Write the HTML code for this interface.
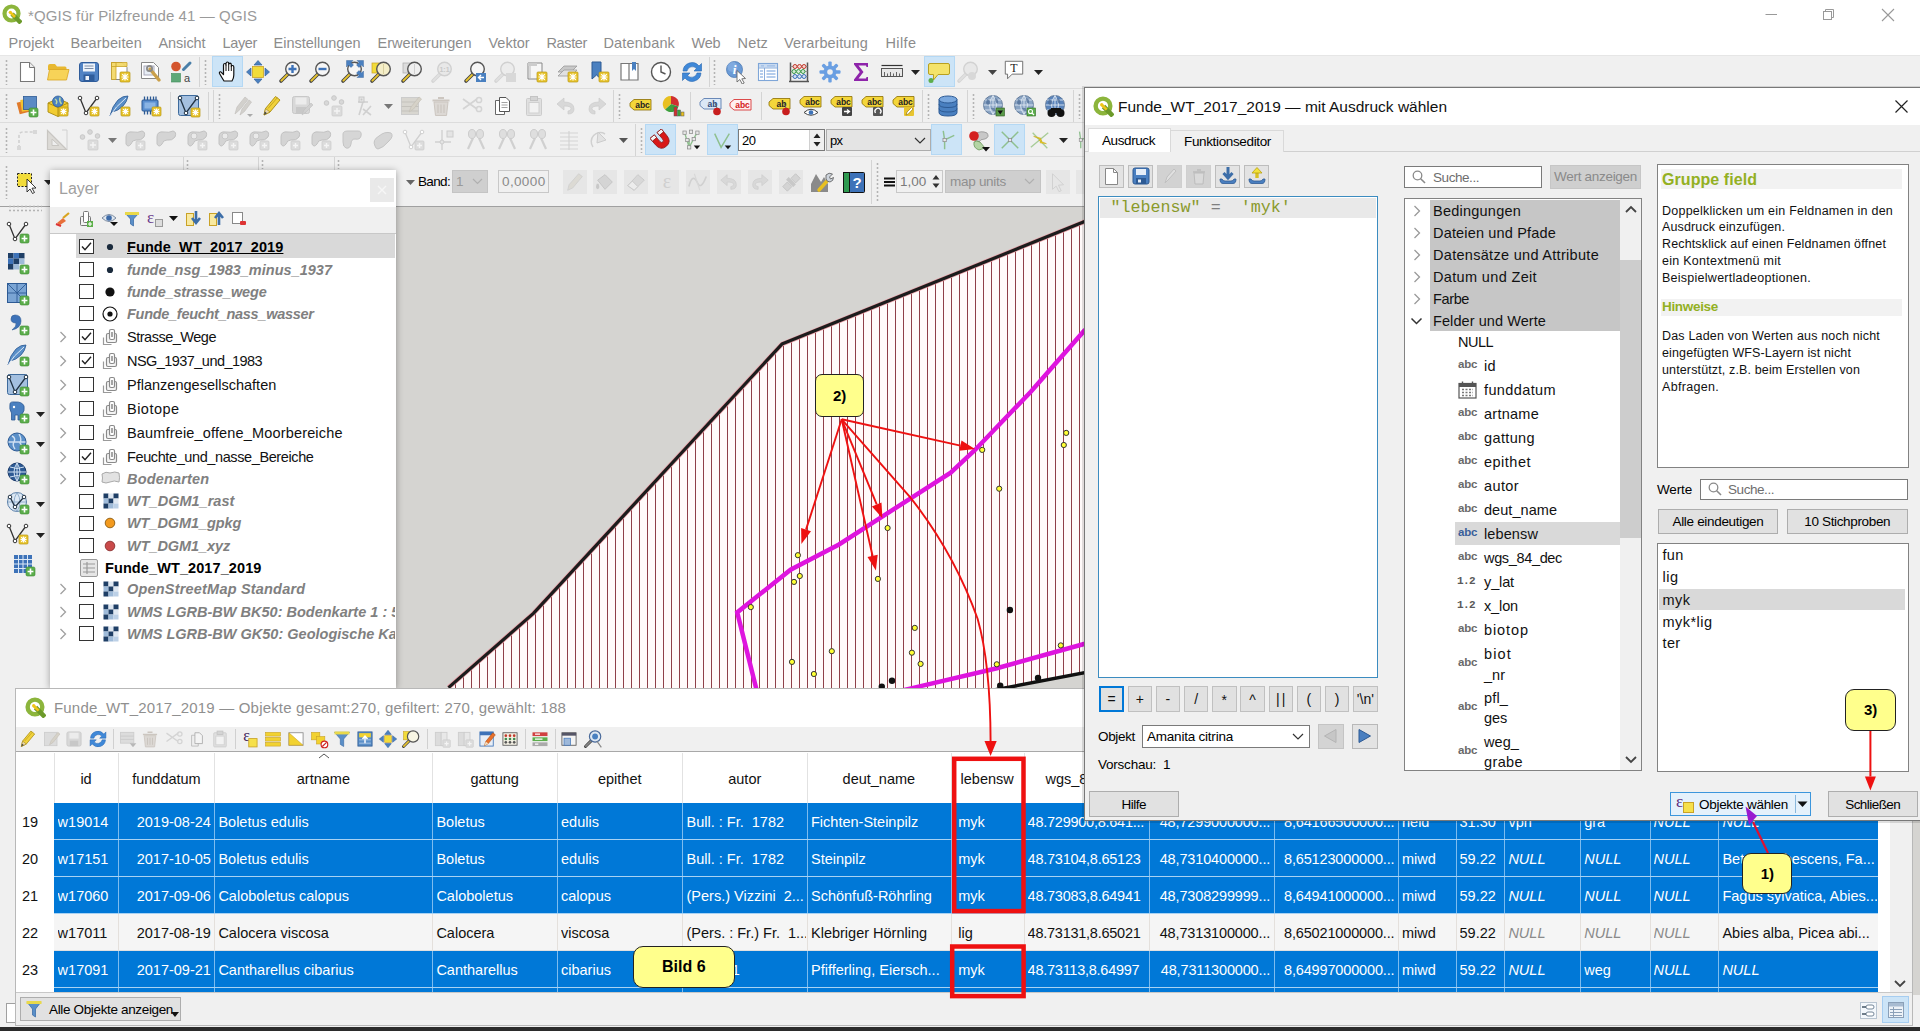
<!DOCTYPE html>
<html lang="de"><head><meta charset="utf-8"><title>QGIS</title><style>
html,body{margin:0;padding:0;}
body{width:1920px;height:1031px;overflow:hidden;position:relative;background:#f0f0f0;font-family:"Liberation Sans",sans-serif;}
.a{position:absolute;box-sizing:border-box;}
.t{white-space:nowrap;}
.m{font-family:"Liberation Mono",monospace;}
.b{font-weight:bold;}
.i{font-style:italic;}
</style></head><body>
<div class="a" style="left:0px;top:0px;width:1920px;height:1031px;background:#f0f0f0;"></div>
<div class="a" style="left:0px;top:0px;width:1920px;height:30px;background:#ffffff;"></div>
<svg class="a" style="left:2px;top:4px;" width="20" height="20" viewBox="0 0 20 20"><circle cx="9.5" cy="9.5" r="7" fill="none" stroke="#8cb53c" stroke-width="4.2"/><path d="M10 10 L19 19" stroke="#6c9a2a" stroke-width="4.5" stroke-linecap="butt"/><path d="M8.5 8.5 L13 13" stroke="#f0c419" stroke-width="2.6"/><circle cx="8.3" cy="8.3" r="1.6" fill="#f0c419"/></svg>
<div class="a t " style="left:28px;top:4.5px;height:21px;line-height:21px;font-size:15px;color:#9a9a9a;letter-spacing:0.100px;">*QGIS für Pilzfreunde 41 — QGIS</div>
<svg class="a" style="left:1765px;top:8px;" width="140" height="14" viewBox="0 0 140 14"><path d="M0.5 6.5 H12" stroke="#999" stroke-width="1"/><rect x="58.5" y="3.5" width="8" height="8" fill="none" stroke="#999"/><path d="M60.5 3.5 V1.5 H68.5 V9.5 H66.5" fill="none" stroke="#999"/><path d="M117 1 L129 13 M129 1 L117 13" stroke="#999" stroke-width="1.1"/></svg>
<div class="a" style="left:0px;top:30px;width:1920px;height:25px;background:#ffffff;"></div>
<div class="a t " style="left:8.5px;top:32.8px;height:20.5px;line-height:20.5px;font-size:14.5px;color:#8c8c8c;letter-spacing:0.053px;">Projekt</div>
<div class="a t " style="left:70.5px;top:32.8px;height:20.5px;line-height:20.5px;font-size:14.5px;color:#8c8c8c;letter-spacing:0.137px;">Bearbeiten</div>
<div class="a t " style="left:158.5px;top:32.8px;height:20.5px;line-height:20.5px;font-size:14.5px;color:#8c8c8c;letter-spacing:-0.078px;">Ansicht</div>
<div class="a t " style="left:222.5px;top:32.8px;height:20.5px;line-height:20.5px;font-size:14.5px;color:#8c8c8c;letter-spacing:-0.354px;">Layer</div>
<div class="a t " style="left:273.5px;top:32.8px;height:20.5px;line-height:20.5px;font-size:14.5px;color:#8c8c8c;letter-spacing:-0.005px;">Einstellungen</div>
<div class="a t " style="left:377.5px;top:32.8px;height:20.5px;line-height:20.5px;font-size:14.5px;color:#8c8c8c;letter-spacing:0.039px;">Erweiterungen</div>
<div class="a t " style="left:488.5px;top:32.8px;height:20.5px;line-height:20.5px;font-size:14.5px;color:#8c8c8c;letter-spacing:-0.018px;">Vektor</div>
<div class="a t " style="left:546.5px;top:32.8px;height:20.5px;line-height:20.5px;font-size:14.5px;color:#8c8c8c;letter-spacing:-0.367px;">Raster</div>
<div class="a t " style="left:603.5px;top:32.8px;height:20.5px;line-height:20.5px;font-size:14.5px;color:#8c8c8c;letter-spacing:0.152px;">Datenbank</div>
<div class="a t " style="left:691.5px;top:32.8px;height:20.5px;line-height:20.5px;font-size:14.5px;color:#8c8c8c;letter-spacing:-0.184px;">Web</div>
<div class="a t " style="left:737.5px;top:32.8px;height:20.5px;line-height:20.5px;font-size:14.5px;color:#8c8c8c;letter-spacing:0.172px;">Netz</div>
<div class="a t " style="left:784px;top:32.8px;height:20.5px;line-height:20.5px;font-size:14.5px;color:#8c8c8c;letter-spacing:0.148px;">Verarbeitung</div>
<div class="a t " style="left:885.5px;top:32.8px;height:20.5px;line-height:20.5px;font-size:14.5px;color:#8c8c8c;letter-spacing:0.399px;">Hilfe</div>
<div class="a" style="left:0px;top:88px;width:1920px;height:1px;background:#dcdcdc;"></div>
<div class="a" style="left:0px;top:122px;width:1920px;height:1px;background:#dcdcdc;"></div>
<div class="a" style="left:0px;top:156px;width:1920px;height:1px;background:#dcdcdc;"></div>
<div class="a" style="left:0px;top:55px;width:1920px;height:1px;background:#e6e6e6;"></div>
<div class="a" style="left:0px;top:206px;width:1920px;height:1px;background:#a0a0a0;"></div>
<div class="a" style="left:0px;top:207px;width:1920px;height:790px;background:#d5d4d1;"></div>
<div class="a" style="left:0px;top:207px;width:50px;height:790px;background:#f0f0f0;"></div>
<div class="a" style="left:0px;top:995px;width:1920px;height:36px;background:#f0f0f0;"></div>
<div class="a" style="left:6px;top:1003px;width:40px;height:20px;background:#fff;border:1px solid #a0a0a0;"></div>
<div class="a" style="left:0px;top:1027px;width:1920px;height:4px;background:#2b2b2b;"></div>
<svg class="a" style="left:396px;top:207px;" width="700" height="483" viewBox="0 0 700 483"><defs><pattern id="hat" width="8" height="8" patternUnits="userSpaceOnUse" x="3"><rect width="8" height="8" fill="#fffafa"/><rect x="0" width="1" height="8" fill="#8f3f48"/></pattern><clipPath id="pc"><polygon points="52.5,480.6 137.4,406.4 385.9,137.1 688.0,14.8 704.0,8.0 704.0,493.0 34.0,493.0"/></clipPath></defs><polygon points="52.5,480.6 137.4,406.4 385.9,137.1 688.0,14.8 704.0,8.0 704.0,493.0 34.0,493.0" fill="url(#hat)"/><polyline points="52.5,480.6 137.4,406.4 385.9,137.1 688.0,14.8 704.0,8.0" fill="none" stroke="#e9a0a8" stroke-width="4.6"/><polyline points="52.5,480.6 137.4,406.4 385.9,137.1 688.0,14.8 704.0,8.0" fill="none" stroke="#1c1c1c" stroke-width="3.2" stroke-linejoin="round"/><polygon points="704.0,462.7 608.8,481.0 599.0,483.0 704.0,483.0" fill="#d5d4d1"/><polyline points="704.0,462.7 608.8,481.0 598.0,483.0" fill="none" stroke="#111" stroke-width="3.4"/><polyline points="704.0,111.0 688.0,124.0 634.8,184.7 579.0,243.0 554.7,265.7 484.3,310.8 443.0,337.5 394.6,362.7 341.2,405.4 360.6,483.0" fill="none" stroke="#de14de" stroke-width="4.5" stroke-linejoin="miter"/><polyline points="704.0,433.0 688.0,437.0 600.8,461.2 518.3,480.6 504.0,484.0" fill="none" stroke="#de14de" stroke-width="4.5"/><circle cx="586.2" cy="242.9" r="2.6" fill="#ffff33" stroke="#333" stroke-width="1"/><circle cx="670.2" cy="225.9" r="2.6" fill="#ffff33" stroke="#333" stroke-width="1"/><circle cx="667.8" cy="238.0" r="2.6" fill="#ffff33" stroke="#333" stroke-width="1"/><circle cx="603.2" cy="281.7" r="2.6" fill="#ffff33" stroke="#333" stroke-width="1"/><circle cx="491.6" cy="321.0" r="2.6" fill="#ffff33" stroke="#333" stroke-width="1"/><circle cx="401.9" cy="348.2" r="2.6" fill="#ffff33" stroke="#333" stroke-width="1"/><circle cx="403.8" cy="369.0" r="2.6" fill="#ffff33" stroke="#333" stroke-width="1"/><circle cx="398.0" cy="374.9" r="2.6" fill="#ffff33" stroke="#333" stroke-width="1"/><circle cx="481.9" cy="371.9" r="2.6" fill="#ffff33" stroke="#333" stroke-width="1"/><circle cx="354.8" cy="400.1" r="2.6" fill="#ffff33" stroke="#333" stroke-width="1"/><circle cx="518.8" cy="420.9" r="2.6" fill="#ffff33" stroke="#333" stroke-width="1"/><circle cx="435.8" cy="444.2" r="2.6" fill="#ffff33" stroke="#333" stroke-width="1"/><circle cx="515.9" cy="445.7" r="2.6" fill="#ffff33" stroke="#333" stroke-width="1"/><circle cx="524.6" cy="456.9" r="2.6" fill="#ffff33" stroke="#333" stroke-width="1"/><circle cx="396.0" cy="454.9" r="2.6" fill="#ffff33" stroke="#333" stroke-width="1"/><circle cx="417.9" cy="467.0" r="2.6" fill="#ffff33" stroke="#333" stroke-width="1"/><circle cx="600.8" cy="457.3" r="2.6" fill="#ffff33" stroke="#333" stroke-width="1"/><circle cx="664.8" cy="438.4" r="2.6" fill="#ffff33" stroke="#333" stroke-width="1"/><circle cx="613.9" cy="403.0" r="3.2" fill="#111"/><circle cx="496.0" cy="473.8" r="3.2" fill="#111"/><circle cx="485.8" cy="479.7" r="3.2" fill="#111"/><circle cx="642.0" cy="470.9" r="3.2" fill="#111"/><circle cx="604.2" cy="478.7" r="3.2" fill="#111"/></svg>
<div class="a" style="left:5px;top:59px;width:3px;height:26px;background-image:radial-gradient(circle,#b4b4b4 0.9px,transparent 1.2px);background-size:3px 4px;"></div>
<svg class="a" style="left:14.5px;top:59.5px;" width="24" height="24" viewBox="0 0 24 24"><path d="M5.500 2.500 H14.500 L19.500 7.500 V21.500 H5.500 Z" fill="#fff" stroke="#777" stroke-width="1.1"/><path d="M14.500 2.500 V7.500 H19.500" fill="#eee" stroke="#777" stroke-width="1"/></svg>
<svg class="a" style="left:45.5px;top:59.5px;" width="24" height="24" viewBox="0 0 24 24"><path d="M2 6 Q2 4 4 4 H9 L11 6.500 H19 Q20.500 6.500 20.500 8 V10 H2 Z" fill="#e8b830"/><path d="M1.500 20 L3.500 9.500 H23 L20.500 20 Z" fill="#f7d358" stroke="#d9a520" stroke-width="0.8"/></svg>
<svg class="a" style="left:77.0px;top:59.5px;" width="24" height="24" viewBox="0 0 24 24"><rect x="2.500" y="2.500" width="19" height="19" rx="2.500" fill="#5183c4" stroke="#2f5c9a" stroke-width="1"/><rect x="6" y="3.500" width="12" height="8" fill="#eef3fa"/><path d="M7.500 6 H16.500 M7.500 8.500 H16.500" stroke="#7c8ea8" stroke-width="1"/><rect x="6.500" y="14.500" width="11" height="7" fill="#2f5c9a"/><rect x="8.500" y="16" width="3.500" height="4" fill="#eef3fa"/></svg>
<svg class="a" style="left:108.0px;top:59.5px;" width="24" height="24" viewBox="0 0 24 24"><path d="M3.500 2.500 H14 L19 7.500 V19.500 H3.500 Z" fill="#fff" stroke="#888"/><path d="M3.500 2.500 H8 V19.500 H3.500 Z M3.500 2.500 H19 V6.500 H3.500 Z" fill="#f3d762" stroke="#c9a227" stroke-width="0.8" fill-opacity="0.9"/><rect x="12" y="12" width="10" height="10" rx="1" fill="#e8c530" stroke="#b8960f" stroke-width="0.7"/><path d="M17.0 13.5 V20.5 M13.5 17.0 H20.5 M14.2 14.2 L19.8 19.8 M19.8 14.2 L14.2 19.8" stroke="#fff" stroke-width="1.2"/></svg>
<svg class="a" style="left:138.5px;top:59.5px;" width="24" height="24" viewBox="0 0 24 24"><path d="M2.500 2.500 H14.500 L19.500 7.500 V18.500 H2.500 Z" fill="#fff" stroke="#888"/><rect x="5" y="6" width="10" height="9" fill="#e8eef6" stroke="#aab"/><path d="M11 9 L20 20" stroke="#caa04a" stroke-width="3.400" stroke-linecap="round"/><circle cx="10.500" cy="8.500" r="2.600" fill="none" stroke="#8a8a8a" stroke-width="1.800"/></svg>
<svg class="a" style="left:169.0px;top:59.5px;" width="24" height="24" viewBox="0 0 24 24"><circle cx="7" cy="6.500" r="4.800" fill="#d4552e"/><rect x="2.500" y="13.500" width="9" height="8.500" fill="#5fa877" stroke="#3f8a5a" stroke-width="0.6"/><path d="M14.500 9.500 L21 3" stroke="#4a7fa8" stroke-width="3" stroke-linecap="round"/><text x="18" y="22" font-family="Liberation Sans, sans-serif" font-size="11" text-anchor="middle" fill="#444">a</text></svg>
<div class="a" style="left:199px;top:57px;width:1px;height:30px;background:#d4d4d4;"></div>
<div class="a" style="left:204px;top:59px;width:3px;height:26px;background-image:radial-gradient(circle,#b4b4b4 0.9px,transparent 1.2px);background-size:3px 4px;"></div>
<div class="a" style="left:212px;top:56px;width:31px;height:31px;background:#cce4f7;border:1px solid #b4d8f4;"></div>
<svg class="a" style="left:215.5px;top:59.5px;" width="24" height="24" viewBox="0 0 24 24"><path d="M8 21 Q5.500 17 3.500 13.500 Q3 11.500 4.800 11.800 L7.500 14.500 V5 Q7.600 3.500 8.800 3.500 Q10 3.500 10 5 V3.500 Q10.200 2 11.400 2 Q12.700 2 12.700 3.500 V4.500 Q12.900 3.200 14 3.200 Q15.300 3.300 15.300 4.800 V6.500 Q15.600 5.400 16.600 5.500 Q17.800 5.600 17.800 7 V15 Q17.800 18.500 16 21 Z" fill="#fff" stroke="#111" stroke-width="1.200" stroke-linejoin="round"/><path d="M10 5 V11 M12.700 4.500 V11 M15.300 6.500 V11" stroke="#111" stroke-width="1"/></svg>
<svg class="a" style="left:245.5px;top:59.5px;" width="24" height="24" viewBox="0 0 24 24"><rect x="6.500" y="6.500" width="11" height="11" fill="#f2dc3a" stroke="#c9a227" stroke-width="0.8"/><path d="M12 0.500 L16 5 H8 Z M12 23.500 L16 19 H8 Z M0.500 12 L5 8 V16 Z M23.500 12 L19 8 V16 Z" fill="#4a80c0" stroke="#2d5a94" stroke-width="0.6"/></svg>
<svg class="a" style="left:277.5px;top:59.5px;" width="24" height="24" viewBox="0 0 24 24"><path d="M10 14 L3 21" stroke="#444" stroke-width="3.6" stroke-linecap="round"/><path d="M9.6 14.4 L3.4 20.6" stroke="#e8c530" stroke-width="2" stroke-linecap="round"/><circle cx="14.5" cy="9" r="6.8" fill="#f6f6f6" stroke="#555" stroke-width="1.4"/><path d="M10.500 9 H18.500 M14.500 5 V13" stroke="#3d72b8" stroke-width="2.400"/></svg>
<svg class="a" style="left:308.0px;top:59.5px;" width="24" height="24" viewBox="0 0 24 24"><path d="M10 14 L3 21" stroke="#444" stroke-width="3.6" stroke-linecap="round"/><path d="M9.6 14.4 L3.4 20.6" stroke="#e8c530" stroke-width="2" stroke-linecap="round"/><circle cx="14.5" cy="9" r="6.8" fill="#f6f6f6" stroke="#555" stroke-width="1.4"/><path d="M10.500 9 H18.500" stroke="#3d72b8" stroke-width="2.400"/></svg>
<svg class="a" style="left:340.0px;top:59.5px;" width="24" height="24" viewBox="0 0 24 24"><path d="M10 14 L3 21" stroke="#444" stroke-width="3.6" stroke-linecap="round"/><path d="M9.6 14.4 L3.4 20.6" stroke="#e8c530" stroke-width="2" stroke-linecap="round"/><circle cx="14.5" cy="9" r="6.8" fill="#f6f6f6" stroke="#555" stroke-width="1.4"/><path d="M6.500 0.500 H13 L11 2.500 L13.500 5 L11 7.500 L8.500 5 L6.500 7 Z M23.500 0.500 V7 L21.500 5 L19 7.500 L16.500 5 L19 2.500 L17 0.500 Z M23.500 17.500 H17 L19 15.500 L16.500 13 L19 10.500 L21.500 13 L23.500 11 Z" fill="#4a80c0" stroke="#2d5a94" stroke-width="0.400"/></svg>
<svg class="a" style="left:369.0px;top:59.5px;" width="24" height="24" viewBox="0 0 24 24"><rect x="3" y="3" width="9" height="10" fill="#f2dc3a" stroke="#c9a227" stroke-width="0.700"/><path d="M10 14 L3 21" stroke="#444" stroke-width="3.6" stroke-linecap="round"/><path d="M9.6 14.4 L3.4 20.6" stroke="#e8c530" stroke-width="2" stroke-linecap="round"/><circle cx="14.5" cy="9" r="6.8" fill="#f4eec8" stroke="#555" stroke-width="1.4"/><path d="M14.500 4 V14" stroke="#d8cfa0" stroke-width="1"/></svg>
<svg class="a" style="left:400.0px;top:59.5px;" width="24" height="24" viewBox="0 0 24 24"><rect x="3" y="3" width="9" height="10" fill="#dcdcdc" stroke="#aaa" stroke-width="0.700"/><path d="M10 14 L3 21" stroke="#444" stroke-width="3.6" stroke-linecap="round"/><path d="M9.6 14.4 L3.4 20.6" stroke="#e8c530" stroke-width="2" stroke-linecap="round"/><circle cx="14.5" cy="9" r="6.8" fill="#f0f0f0" stroke="#555" stroke-width="1.4"/><path d="M14.500 4 V14" stroke="#d0d0d0" stroke-width="1"/></svg>
<svg class="a" style="left:430.0px;top:59.5px;" width="24" height="24" viewBox="0 0 24 24"><path d="M10 14 L3 21" stroke="#d4d4d4" stroke-width="3.6" stroke-linecap="round"/><path d="M9.6 14.4 L3.4 20.6" stroke="#e0e0e0" stroke-width="2" stroke-linecap="round"/><circle cx="14.5" cy="9" r="6.8" fill="#e8e8e8" stroke="#d0d0d0" stroke-width="1.4"/><text x="14.500" y="11.500" font-family="Liberation Sans, sans-serif" font-size="7" font-weight="bold" text-anchor="middle" fill="#c8c8c8">1:1</text></svg>
<svg class="a" style="left:463.0px;top:59.5px;" width="24" height="24" viewBox="0 0 24 24"><path d="M10 14 L3 21" stroke="#444" stroke-width="3.6" stroke-linecap="round"/><path d="M9.6 14.4 L3.4 20.6" stroke="#e8c530" stroke-width="2" stroke-linecap="round"/><circle cx="14.5" cy="9" r="6.8" fill="#f6f6f6" stroke="#555" stroke-width="1.4"/><rect x="13" y="13" width="10" height="9" fill="#4a80c0"/><path d="M21 17.500 H16 M18 15 L15.500 17.500 L18 20" stroke="#fff" stroke-width="1.400" fill="none"/></svg>
<svg class="a" style="left:493.0px;top:59.5px;" width="24" height="24" viewBox="0 0 24 24"><path d="M10 14 L3 21" stroke="#d4d4d4" stroke-width="3.6" stroke-linecap="round"/><path d="M9.6 14.4 L3.4 20.6" stroke="#e0e0e0" stroke-width="2" stroke-linecap="round"/><circle cx="14.5" cy="9" r="6.8" fill="#ececec" stroke="#d0d0d0" stroke-width="1.4"/><rect x="13" y="13" width="10" height="9" fill="#d8d8d8"/></svg>
<svg class="a" style="left:525.0px;top:59.5px;" width="24" height="24" viewBox="0 0 24 24"><path d="M3 3 H17 V19 H3 Z" fill="#f6f6f6" stroke="#888"/><path d="M5 3 V19" stroke="#bbb"/><path d="M3 3 H12 V6 H3 Z" fill="#ccc"/><rect x="12" y="12" width="10" height="10" rx="1" fill="#e8c530" stroke="#b8960f" stroke-width="0.7"/><path d="M17.0 13.5 V20.5 M13.5 17.0 H20.5 M14.2 14.2 L19.8 19.8 M19.8 14.2 L14.2 19.8" stroke="#fff" stroke-width="1.2"/></svg>
<svg class="a" style="left:556.0px;top:59.5px;" width="24" height="24" viewBox="0 0 24 24"><path d="M2 12 L8 6 H21 L15 12 Z" fill="#c8c8c8" stroke="#999" stroke-width="0.800"/><path d="M2 16 L8 10 H21 L15 16 Z" fill="#e0e0e0" stroke="#999" stroke-width="0.800"/><rect x="12" y="12" width="10" height="10" rx="1" fill="#e8c530" stroke="#b8960f" stroke-width="0.7"/><path d="M17.0 13.5 V20.5 M13.5 17.0 H20.5 M14.2 14.2 L19.8 19.8 M19.8 14.2 L14.2 19.8" stroke="#fff" stroke-width="1.2"/></svg>
<svg class="a" style="left:587.0px;top:59.5px;" width="24" height="24" viewBox="0 0 24 24"><path d="M5 2 H14 V19 L9.500 15 L5 19 Z" fill="#4a80c0" stroke="#2d5a94"/><rect x="12" y="12" width="10" height="10" rx="1" fill="#e8c530" stroke="#b8960f" stroke-width="0.7"/><path d="M17.0 13.5 V20.5 M13.5 17.0 H20.5 M14.2 14.2 L19.8 19.8 M19.8 14.2 L14.2 19.8" stroke="#fff" stroke-width="1.2"/></svg>
<svg class="a" style="left:618.0px;top:59.5px;" width="24" height="24" viewBox="0 0 24 24"><path d="M3 3.500 H11 V20 H3 Z M11 3.500 H20 V20 H11 Z" fill="#fff" stroke="#777" stroke-width="1.200"/><path d="M14 2 H18 V11 L16 9 L14 11 Z" fill="#4a80c0"/></svg>
<svg class="a" style="left:649.0px;top:59.5px;" width="24" height="24" viewBox="0 0 24 24"><circle cx="12" cy="12" r="9.500" fill="#fff" stroke="#555" stroke-width="1.400"/><path d="M12 5.500 V12 L16.500 14" fill="none" stroke="#555" stroke-width="1.400"/></svg>
<svg class="a" style="left:680.0px;top:59.5px;" width="24" height="24" viewBox="0 0 24 24"><path d="M3 11 A9 9 0 0 1 19 6 L21.500 3.500 V11 H14 L16.500 8.500 A5.500 5.500 0 0 0 7 11 Z" fill="#3f88d8" stroke="#2666b0" stroke-width="0.600"/><path d="M21 13 A9 9 0 0 1 5 18 L2.500 20.500 V13 H10 L7.500 15.500 A5.500 5.500 0 0 0 17 13 Z" fill="#3f88d8" stroke="#2666b0" stroke-width="0.600"/></svg>
<div class="a" style="left:709px;top:57px;width:1px;height:30px;background:#d4d4d4;"></div>
<div class="a" style="left:713px;top:59px;width:3px;height:26px;background-image:radial-gradient(circle,#b4b4b4 0.9px,transparent 1.2px);background-size:3px 4px;"></div>
<svg class="a" style="left:725.0px;top:59.5px;" width="24" height="24" viewBox="0 0 24 24"><circle cx="9.500" cy="9.500" r="8" fill="#6b9bd6" stroke="#4a78b4" stroke-width="0.800"/><circle cx="7.500" cy="7" r="5" fill="#8db4e4" opacity="0.600"/><text x="9.500" y="14" font-family="Liberation Serif, serif" font-size="13" font-weight="bold" font-style="italic" text-anchor="middle" fill="#fff">i</text><path d="M12 10.500 V22 L14.800 19.500 L17.200 24 L19.200 23 L16.800 18.800 L20.500 18.500 Z" fill="#fff" stroke="#666" stroke-width="0.900"/></svg>
<svg class="a" style="left:756.0px;top:59.5px;" width="24" height="24" viewBox="0 0 24 24"><rect x="2.500" y="3.500" width="19" height="17" fill="#fff" stroke="#7fa6d8" stroke-width="1.100"/><rect x="3" y="4" width="18" height="3.500" fill="#c8daf0"/><path d="M2.500 8 H21.500 M8.500 8 V20.500" stroke="#7fa6d8" stroke-width="0.900"/><path d="M4 11 H7 M10.500 11 H19.500 M4 14 H7 M10.500 14 H19.500 M4 17 H7 M10.500 17 H19.500 M5 5.800 H8 M11 5.800 H19" stroke="#9dbde6" stroke-width="1.300"/></svg>
<svg class="a" style="left:787.0px;top:59.5px;" width="24" height="24" viewBox="0 0 24 24"><path d="M3.500 2.500 V21 M20.500 2.500 V21 M2 21.500 H22" stroke="#555" stroke-width="1.500"/><path d="M3.500 6.500 H20.500 M3.500 11.500 H20.500 M3.500 16.500 H20.500" stroke="#888" stroke-width="0.800"/><g fill="#f4d4d0" stroke="#c0392b" stroke-width="1"><circle cx="8" cy="6.500" r="2"/><circle cx="12.500" cy="6.500" r="2"/><circle cx="17" cy="6.500" r="2"/></g><g fill="#d4ecd4" stroke="#3d9a4a" stroke-width="1"><circle cx="7" cy="11.500" r="2"/><circle cx="11.500" cy="11.500" r="2"/><circle cx="16" cy="11.500" r="2"/></g><g fill="#d4e0f4" stroke="#3d72b8" stroke-width="1"><circle cx="8" cy="16.500" r="2"/><circle cx="12.500" cy="16.500" r="2"/><circle cx="17" cy="16.500" r="2"/></g></svg>
<svg class="a" style="left:818.0px;top:59.5px;" width="24" height="24" viewBox="0 0 24 24"><g fill="#6a9fe2"><circle cx="12" cy="12" r="6.500"/><rect x="10.300" y="1.500" width="3.400" height="21" rx="1" transform="rotate(0 12 12)"/><rect x="10.300" y="1.500" width="3.400" height="21" rx="1" transform="rotate(45 12 12)"/><rect x="10.300" y="1.500" width="3.400" height="21" rx="1" transform="rotate(90 12 12)"/><rect x="10.300" y="1.500" width="3.400" height="21" rx="1" transform="rotate(135 12 12)"/></g><circle cx="12" cy="12" r="2.800" fill="#f0f0f0"/></svg>
<svg class="a" style="left:849.0px;top:59.5px;" width="24" height="24" viewBox="0 0 24 24"><path d="M5 3 H19 V7 H17.500 L17 5.500 H9.500 L14.500 12 L9.500 18.500 H17 L17.500 17 H19 V21 H5 V19.500 L10.800 12 L5 4.500 Z" fill="#8e24aa"/></svg>
<svg class="a" style="left:880.0px;top:59.5px;" width="24" height="24" viewBox="0 0 24 24"><rect x="1.500" y="8.500" width="21" height="8" fill="#e8e8e8" stroke="#555" stroke-width="1"/><path d="M4.500 16 V12 M7.500 16 V13.500 M10.500 16 V12 M13.500 16 V13.500 M16.500 16 V12 M19.500 16 V13.500" stroke="#555" stroke-width="0.900"/><path d="M1.500 5.500 H22.500" stroke="#333" stroke-width="1.200"/></svg>
<svg class="a" style="left:910.5px;top:69.5px;" width="9" height="6" viewBox="0 0 9 6"><path d="M0 0 H9 L4.500 5 Z" fill="#222"/></svg>
<div class="a" style="left:924px;top:56px;width:31px;height:31px;background:#cce4f7;border:1px solid #b4d8f4;"></div>
<svg class="a" style="left:927.0px;top:59.5px;" width="24" height="24" viewBox="0 0 24 24"><path d="M3 3.500 H21 Q22.500 3.500 22.500 5 V13 Q22.500 14.500 21 14.500 H11 L6.500 20 V14.500 H3 Q1.500 14.500 1.500 13 V5 Q1.500 3.500 3 3.500 Z" fill="#f4e36a" stroke="#b8a020" stroke-width="1"/><circle cx="4" cy="20.500" r="2.500" fill="#5cae4c"/></svg>
<svg class="a" style="left:956.0px;top:59.5px;" width="24" height="24" viewBox="0 0 24 24"><path d="M10 14 L3 21" stroke="#d4d4d4" stroke-width="3.6" stroke-linecap="round"/><path d="M9.6 14.4 L3.4 20.6" stroke="#e0e0e0" stroke-width="2" stroke-linecap="round"/><circle cx="14.5" cy="9" r="6.8" fill="#e8e8e8" stroke="#d2d2d2" stroke-width="1.4"/><circle cx="16" cy="16" r="4" fill="#d8d8d8"/></svg>
<svg class="a" style="left:987.5px;top:69.5px;" width="9" height="6" viewBox="0 0 9 6"><path d="M0 0 H9 L4.500 5 Z" fill="#444"/></svg>
<svg class="a" style="left:1003.0px;top:59.0px;" width="22" height="22" viewBox="0 0 24 24"><path d="M2.500 2.500 H21.500 V16.500 H10 L5 21.500 V16.500 H2.500 Z" fill="#fff" stroke="#666" stroke-width="1"/><text x="12" y="14" font-family="Liberation Serif, serif" font-size="13" text-anchor="middle" fill="#222">T</text></svg>
<svg class="a" style="left:1033.5px;top:69.5px;" width="9" height="6" viewBox="0 0 9 6"><path d="M0 0 H9 L4.500 5 Z" fill="#222"/></svg>
<div class="a" style="left:5px;top:93px;width:3px;height:26px;background-image:radial-gradient(circle,#b4b4b4 0.9px,transparent 1.2px);background-size:3px 4px;"></div>
<svg class="a" style="left:15.0px;top:93.5px;" width="24" height="24" viewBox="0 0 24 24"><rect x="3" y="7" width="12" height="12" fill="#e07a2a" transform="rotate(-15 9 13)"/><rect x="6" y="5" width="12" height="12" fill="#f2c230" transform="rotate(-8 12 11)"/><rect x="8.500" y="2.500" width="13" height="13" fill="#5a8ac4" stroke="#2d5a94" stroke-width="0.800"/><rect x="14" y="14" width="9" height="9" rx="1.5" fill="#5cae4c" stroke="#3d8a30" stroke-width="0.6"/><path d="M18.5 15.6 V21.4 M15.6 18.5 H21.4" stroke="#fff" stroke-width="1.6"/></svg>
<svg class="a" style="left:46.0px;top:93.5px;" width="24" height="24" viewBox="0 0 24 24"><path d="M2 9 L12 4.500 L22 9 V18 L12 22.500 L2 18 Z" fill="#f2cc30" stroke="#a88a10" stroke-width="0.900"/><path d="M2 9 L12 13.500 L22 9 M12 13.500 V22.500" fill="none" stroke="#a88a10" stroke-width="0.900"/><circle cx="12" cy="7.500" r="5.500" fill="#4a80c0" stroke="#2d5a94" stroke-width="0.700"/><path d="M9 5 Q12 7 10 10 M14 3.500 Q13 7 15.500 10" stroke="#bcd6a0" stroke-width="1.500" fill="none"/><rect x="13" y="13" width="9" height="9" rx="1" fill="#e8c530" stroke="#b8960f" stroke-width="0.7"/><path d="M17.5 14.5 V20.5 M14.5 17.5 H20.5 M15.2 15.2 L19.8 19.8 M19.8 15.2 L15.2 19.8" stroke="#fff" stroke-width="1.2"/></svg>
<svg class="a" style="left:77.0px;top:93.5px;" width="24" height="24" viewBox="0 0 24 24"><path d="M3 4 L9 19 L20 4" fill="none" stroke="#333" stroke-width="1.3"/><circle cx="3" cy="4" r="1.8" fill="#fff" stroke="#333"/><circle cx="9" cy="19" r="1.8" fill="#fff" stroke="#333"/><circle cx="20" cy="4" r="1.8" fill="#fff" stroke="#333"/><rect x="13" y="13" width="9" height="9" rx="1" fill="#e8c530" stroke="#b8960f" stroke-width="0.7"/><path d="M17.5 14.5 V20.5 M14.5 17.5 H20.5 M15.2 15.2 L19.8 19.8 M19.8 15.2 L15.2 19.8" stroke="#fff" stroke-width="1.2"/></svg>
<svg class="a" style="left:108.0px;top:93.5px;" width="24" height="24" viewBox="0 0 24 24"><path d="M2 22 Q4 12 10 6 Q15 1.500 20 2 Q19 8 15 12 Q10 17 4 18 Z" fill="#5a8fc8" stroke="#2d5a94" stroke-width="0.800"/><path d="M2 22 Q7 13 18 4" stroke="#dce8f6" stroke-width="1" fill="none"/><rect x="13" y="13" width="9" height="9" rx="1" fill="#e8c530" stroke="#b8960f" stroke-width="0.7"/><path d="M17.5 14.5 V20.5 M14.5 17.5 H20.5 M15.2 15.2 L19.8 19.8 M19.8 15.2 L15.2 19.8" stroke="#fff" stroke-width="1.2"/></svg>
<svg class="a" style="left:139.0px;top:93.5px;" width="24" height="24" viewBox="0 0 24 24"><rect x="3" y="6" width="16" height="11" rx="1" fill="#5a8fd0" stroke="#2d5a94"/><path d="M5.500 6 V2.500 M8.500 6 V2.500 M11.500 6 V2.500 M14.500 6 V2.500 M17 6 V2.500 M5.500 17 V20.500 M8.500 17 V20.500 M11.500 17 V20.500" stroke="#2d5a94" stroke-width="1.300"/><rect x="5.500" y="8.500" width="11" height="6" fill="#8ab4e4"/><rect x="13" y="13" width="9" height="9" rx="1" fill="#e8c530" stroke="#b8960f" stroke-width="0.7"/><path d="M17.5 14.5 V20.5 M14.5 17.5 H20.5 M15.2 15.2 L19.8 19.8 M19.8 15.2 L15.2 19.8" stroke="#fff" stroke-width="1.2"/></svg>
<div class="a" style="left:170px;top:92px;width:1px;height:28px;background:#d4d4d4;"></div>
<svg class="a" style="left:177.0px;top:93.5px;" width="24" height="24" viewBox="0 0 24 24"><rect x="1.500" y="1.500" width="20" height="20" rx="2" fill="#a4c0e0" stroke="#3d6a9c" stroke-width="1"/><path d="M3 4 L9 19 L20 4" fill="none" stroke="#234" stroke-width="1.3"/><circle cx="3" cy="4" r="1.8" fill="#fff" stroke="#234"/><circle cx="9" cy="19" r="1.8" fill="#fff" stroke="#234"/><circle cx="20" cy="4" r="1.8" fill="#fff" stroke="#234"/><rect x="14" y="14" width="9" height="9" rx="1" fill="#e8c530" stroke="#b8960f" stroke-width="0.7"/><path d="M18.5 15.5 V21.5 M15.5 18.5 H21.5 M16.2 16.2 L20.8 20.8 M20.8 16.2 L16.2 20.8" stroke="#fff" stroke-width="1.2"/></svg>
<div class="a" style="left:208px;top:92px;width:1px;height:28px;background:#d4d4d4;"></div>
<div class="a" style="left:213px;top:90px;width:1px;height:32px;background:#d4d4d4;"></div>
<div class="a" style="left:218px;top:93px;width:3px;height:26px;background-image:radial-gradient(circle,#b4b4b4 0.9px,transparent 1.2px);background-size:3px 4px;"></div>
<svg class="a" style="left:231.0px;top:93.5px;" width="24" height="24" viewBox="0 0 24 24"><path d="M4 20 L6 13 L14 3 L17 5.500 L9 15.500 Z M9 21 L11 15 L18 6 L20.500 8 L13.500 17.500 Z" fill="#d2d0cc" stroke="#c4c2be" stroke-width="0.700"/><path d="M16 20 H22 L19 23 Z" fill="#aaa"/></svg>
<svg class="a" style="left:260.0px;top:93.5px;" width="24" height="24" viewBox="0 0 24 24"><path d="M4 21 L5.500 14.500 L15.500 2.500 L20 6 L10 18 Z" fill="#f0d23c" stroke="#a88a10" stroke-width="0.900"/><path d="M4 21 L5.500 14.500 L10 18 Z" fill="#e8d8b0" stroke="#a88a10" stroke-width="0.700"/><path d="M4 21 L4.800 17.600 L7 19.300 Z" fill="#444"/><path d="M8 14.500 L17.500 3.500" stroke="#c9a820" stroke-width="1"/></svg>
<svg class="a" style="left:290.0px;top:93.5px;" width="24" height="24" viewBox="0 0 24 24"><rect x="2.500" y="2.500" width="17" height="17" rx="2" fill="#d8d8d8" stroke="#c8c8c8"/><rect x="5.500" y="3.500" width="11" height="7" fill="#ececec"/><rect x="6" y="13" width="10" height="6.500" fill="#c8c8c8"/><path d="M12 21 L14 16 L21 9 L23 11 L16 18 Z" fill="#d0d0d0" stroke="#c0c0c0" stroke-width="0.600"/></svg>
<svg class="a" style="left:322.0px;top:93.5px;" width="24" height="24" viewBox="0 0 24 24"><circle cx="4.500" cy="9" r="2.300" fill="#d8d8d8" stroke="#c8c8c8"/><circle cx="12" cy="4" r="2.300" fill="#d8d8d8" stroke="#c8c8c8"/><circle cx="19.500" cy="8" r="2.300" fill="#d8d8d8" stroke="#c8c8c8"/><rect x="10" y="12" width="10" height="10" rx="1" fill="#dcdcdc" stroke="#cacaca" stroke-width="0.7"/><path d="M12 17.0 H18 M15.0 14 V20" stroke="#f4f4f4" stroke-width="1.4"/></svg>
<svg class="a" style="left:354.0px;top:93.5px;" width="24" height="24" viewBox="0 0 24 24"><path d="M5 21 L9 8 M4 8 H14 M9 15 L17 21 M17 12 L9 21" fill="none" stroke="#d0d0d0" stroke-width="1.600"/><rect x="5" y="3" width="5" height="5" fill="#e4e4e4" stroke="#c8c8c8"/><circle cx="7.500" cy="5.500" r="1" fill="#c8c8c8"/></svg>
<svg class="a" style="left:383.5px;top:103.5px;" width="9" height="6" viewBox="0 0 9 6"><path d="M0 0 H9 L4.500 5 Z" fill="#777"/></svg>
<svg class="a" style="left:399.0px;top:93.5px;" width="24" height="24" viewBox="0 0 24 24"><rect x="2.500" y="3.500" width="17" height="17" fill="#d8d6d0" stroke="#ccc"/><path d="M2.500 8 H19.500 M2.500 12.500 H19.500 M2.500 17 H19.500" stroke="#c4c2bc" stroke-width="1"/><path d="M10 18 L12 13 L20 3 L22.500 5 L14.500 15 Z" fill="#d6d2c8" stroke="#c4c0b6" stroke-width="0.700"/></svg>
<svg class="a" style="left:429.0px;top:93.5px;" width="24" height="24" viewBox="0 0 24 24"><path d="M5 8 H19 L17.500 21.500 H6.500 Z" fill="#dcd8d4" stroke="#ccc6c0"/><path d="M3.500 6.500 H20.500 M9 4 H15" stroke="#ccc6c0" stroke-width="1.800"/><path d="M9 10.500 V19 M12 10.500 V19 M15 10.500 V19" stroke="#c8c2bc" stroke-width="1"/></svg>
<svg class="a" style="left:460.0px;top:93.5px;" width="24" height="24" viewBox="0 0 24 24"><path d="M3 5 L17 15 M3 15 L17 5" stroke="#d4d4d4" stroke-width="1.800"/><circle cx="19" cy="6" r="2.600" fill="none" stroke="#d4d4d4" stroke-width="1.500"/><circle cx="19" cy="15" r="2.600" fill="none" stroke="#d4d4d4" stroke-width="1.500"/></svg>
<svg class="a" style="left:491.0px;top:93.5px;" width="24" height="24" viewBox="0 0 24 24"><path d="M4.500 6.500 H13.500 V20.500 H4.500 Z" fill="#fff" stroke="#666"/><path d="M8.500 3.500 H15 L18.500 7 V17.500 H8.500 Z" fill="#fff" stroke="#555"/><path d="M10.500 8.500 H16.500 M10.500 11 H16.500 M10.500 13.500 H16.500" stroke="#999" stroke-width="0.900"/></svg>
<svg class="a" style="left:522.0px;top:93.5px;" width="24" height="24" viewBox="0 0 24 24"><rect x="4.500" y="4.500" width="15" height="17" rx="1" fill="#e0e0e0" stroke="#ccc"/><rect x="8.500" y="2.500" width="7" height="4" fill="#d4d4d4" stroke="#c4c4c4"/><rect x="7" y="8.500" width="10" height="10.500" fill="#f2f2f2" stroke="#d0d0d0"/></svg>
<svg class="a" style="left:554.0px;top:93.5px;" width="24" height="24" viewBox="0 0 24 24"><path d="M3 10 L10 4 V8 Q20 8 20 15 Q20 20 14 20 V17 Q17 17 17 14.500 Q17 12 10 12 V16 Z" fill="#d8d8d8" stroke="#ccc" stroke-width="0.700"/></svg>
<svg class="a" style="left:585.0px;top:93.5px;" width="24" height="24" viewBox="0 0 24 24"><path d="M21 10 L14 4 V8 Q4 8 4 15 Q4 20 10 20 V17 Q7 17 7 14.500 Q7 12 14 12 V16 Z" fill="#d8d8d8" stroke="#ccc" stroke-width="0.700"/></svg>
<div class="a" style="left:613px;top:90px;width:1px;height:32px;background:#d4d4d4;"></div>
<div class="a" style="left:618px;top:93px;width:3px;height:26px;background-image:radial-gradient(circle,#b4b4b4 0.9px,transparent 1.2px);background-size:3px 4px;"></div>
<svg class="a" style="left:629.0px;top:93.5px;" width="24" height="24" viewBox="0 0 24 24"><g transform="translate(0,3)"><path d="M1 6 L5 2.500 H22 V13 H5 L1 9.500 Z" fill="#f4d63a" stroke="#8a6d00" stroke-width="0.8"/><text x="13.500" y="10.800" font-family="Liberation Sans, sans-serif" font-size="8.500" font-weight="bold" text-anchor="middle" fill="#222">abc</text></g></svg>
<svg class="a" style="left:661.0px;top:93.5px;" width="24" height="24" viewBox="0 0 24 24"><path d="M10 10 L10 2 A8 8 0 0 1 17.500 12.500 Z" fill="#d03030"/><path d="M10 10 L17.500 12.500 A8 8 0 0 1 4 15.500 Z" fill="#3da03d"/><path d="M10 10 L4 15.500 A8 8 0 0 1 10 2 Z" fill="#e8c020"/><rect x="13" y="13" width="3" height="9" fill="#d03030" stroke="#555" stroke-width="0.500"/><rect x="16.500" y="16" width="3" height="6" fill="#3da03d" stroke="#555" stroke-width="0.500"/><rect x="20" y="18" width="3" height="4" fill="#e8c020" stroke="#555" stroke-width="0.500"/></svg>
<div class="a" style="left:690px;top:92px;width:1px;height:28px;background:#d4d4d4;"></div>
<svg class="a" style="left:699.0px;top:93.5px;" width="24" height="24" viewBox="0 0 24 24"><g transform="translate(0,2)"><path d="M1 6 L5 2.500 H22 V13 H5 L1 9.500 Z" fill="#dbe8f6" stroke="#4a70a8" stroke-width="0.8"/><text x="13.500" y="10.800" font-family="Liberation Sans, sans-serif" font-size="8.500" font-weight="bold" text-anchor="middle" fill="#2d4a7a">ab</text></g><circle cx="18" cy="17.500" r="3.800" fill="#c81e1e"/><path d="M18 14 L16 9" stroke="#666" stroke-width="1"/></svg>
<svg class="a" style="left:729.0px;top:93.5px;" width="24" height="24" viewBox="0 0 24 24"><g transform="translate(0,3)"><path d="M1 6 L5 2.500 H22 V13 H5 L1 9.500 Z" fill="#fff0f0" stroke="#d42020" stroke-width="0.8"/><text x="13.500" y="10.800" font-family="Liberation Sans, sans-serif" font-size="8.500" font-weight="bold" text-anchor="middle" fill="#d42020">abc</text></g></svg>
<div class="a" style="left:761px;top:92px;width:1px;height:28px;background:#d4d4d4;"></div>
<svg class="a" style="left:768.0px;top:93.5px;" width="24" height="24" viewBox="0 0 24 24"><g transform="translate(0,2)"><path d="M1 6 L5 2.500 H22 V13 H5 L1 9.500 Z" fill="#f4d63a" stroke="#8a6d00" stroke-width="0.8"/><text x="13.500" y="10.800" font-family="Liberation Sans, sans-serif" font-size="8.500" font-weight="bold" text-anchor="middle" fill="#222">ab</text></g><circle cx="18" cy="17.500" r="3.800" fill="#c81e1e"/><path d="M18 14 L16 9" stroke="#666" stroke-width="1"/></svg>
<svg class="a" style="left:799.0px;top:93.5px;" width="24" height="24" viewBox="0 0 24 24"><g transform="translate(0,0)"><path d="M1 6 L5 2.500 H22 V13 H5 L1 9.500 Z" fill="#f4d63a" stroke="#8a6d00" stroke-width="0.8"/><text x="13.500" y="10.800" font-family="Liberation Sans, sans-serif" font-size="8.500" font-weight="bold" text-anchor="middle" fill="#222">abc</text></g><path d="M5 18.500 Q12 12 19 18.500 Q12 24 5 18.500 Z" fill="#fff" stroke="#444"/><circle cx="12" cy="18.500" r="2.300" fill="#3d72b8"/></svg>
<svg class="a" style="left:830.0px;top:93.5px;" width="24" height="24" viewBox="0 0 24 24"><g transform="translate(0,0)"><path d="M1 6 L5 2.500 H22 V13 H5 L1 9.500 Z" fill="#f4d63a" stroke="#8a6d00" stroke-width="0.8"/><text x="13.500" y="10.800" font-family="Liberation Sans, sans-serif" font-size="8.500" font-weight="bold" text-anchor="middle" fill="#222">abc</text></g><rect x="12" y="13" width="10" height="9" rx="1" fill="#444"/><path d="M14 17.500 H19 M17 15.500 L19.500 17.500 L17 19.500" stroke="#fff" stroke-width="1.300" fill="none"/></svg>
<svg class="a" style="left:861.0px;top:93.5px;" width="24" height="24" viewBox="0 0 24 24"><g transform="translate(0,0)"><path d="M1 6 L5 2.500 H22 V13 H5 L1 9.500 Z" fill="#f4d63a" stroke="#8a6d00" stroke-width="0.8"/><text x="13.500" y="10.800" font-family="Liberation Sans, sans-serif" font-size="8.500" font-weight="bold" text-anchor="middle" fill="#222">abc</text></g><rect x="12" y="13" width="10" height="9" rx="1" fill="#555"/><path d="M14.500 19 A3 3 0 1 1 19 19.500" stroke="#fff" stroke-width="1.300" fill="none"/></svg>
<svg class="a" style="left:892.0px;top:93.5px;" width="24" height="24" viewBox="0 0 24 24"><g transform="translate(0,0)"><path d="M1 6 L5 2.500 H22 V13 H5 L1 9.500 Z" fill="#f4d63a" stroke="#8a6d00" stroke-width="0.8"/><text x="13.500" y="10.800" font-family="Liberation Sans, sans-serif" font-size="8.500" font-weight="bold" text-anchor="middle" fill="#222">abc</text></g><rect x="12" y="13" width="10" height="9" rx="1" fill="#e8c530"/><path d="M14 21 L15 18 L19.500 13.500 L21 15 L16.500 19.800 Z" fill="#fff" stroke="#8a6d00" stroke-width="0.600"/></svg>
<div class="a" style="left:922px;top:90px;width:1px;height:32px;background:#d4d4d4;"></div>
<div class="a" style="left:927px;top:93px;width:3px;height:26px;background-image:radial-gradient(circle,#b4b4b4 0.9px,transparent 1.2px);background-size:3px 4px;"></div>
<svg class="a" style="left:936.0px;top:93.5px;" width="24" height="24" viewBox="0 0 24 24"><path d="M3 5.500 V18.500 Q3 22 12 22 Q21 22 21 18.500 V5.500 Z" fill="#4a80c0" stroke="#2d5a94"/><ellipse cx="12" cy="5.500" rx="9" ry="3.500" fill="#7aa8de" stroke="#2d5a94"/><path d="M3 10 Q3 13.500 12 13.500 Q21 13.500 21 10 M3 14.500 Q3 18 12 18 Q21 18 21 14.500" fill="none" stroke="#2d5a94" stroke-width="1"/></svg>
<div class="a" style="left:967px;top:90px;width:1px;height:32px;background:#d4d4d4;"></div>
<div class="a" style="left:972px;top:93px;width:3px;height:26px;background-image:radial-gradient(circle,#b4b4b4 0.9px,transparent 1.2px);background-size:3px 4px;"></div>
<svg class="a" style="left:982.0px;top:93.5px;" width="24" height="24" viewBox="0 0 24 24"><circle cx="11" cy="11" r="9.500" fill="#8aa4c4" stroke="#5a7494" stroke-width="0.900"/><path d="M1.500 11 H20.500 M3 6 H19 M3 16 H19 M11 1.500 V20.500 M11 1.500 Q4 11 11 20.500 M11 1.500 Q18 11 11 20.500" fill="none" stroke="#dce6f2" stroke-width="0.900"/><path d="M5 5 Q9 6 8 10 Q5 12 4 9 Z M13 4 Q17 5 16 9 Q13 10 13 4 Z M9 14 Q13 13 14 17 Q11 19 9 14 Z" fill="#4a6a94" opacity="0.700"/><rect x="14" y="14" width="8.500" height="8" fill="#5a9a4a" stroke="#2d5a20" stroke-width="0.600"/><path d="M15.500 16.500 H21 L18.200 20.500 Z" fill="#111"/></svg>
<svg class="a" style="left:1013.0px;top:93.5px;" width="24" height="24" viewBox="0 0 24 24"><circle cx="11" cy="11" r="9.500" fill="#8aa4c4" stroke="#5a7494" stroke-width="0.900"/><path d="M1.500 11 H20.500 M3 6 H19 M3 16 H19 M11 1.500 V20.500 M11 1.500 Q4 11 11 20.500 M11 1.500 Q18 11 11 20.500" fill="none" stroke="#dce6f2" stroke-width="0.900"/><path d="M5 5 Q9 6 8 10 Q5 12 4 9 Z M13 4 Q17 5 16 9 Q13 10 13 4 Z M9 14 Q13 13 14 17 Q11 19 9 14 Z" fill="#4a6a94" opacity="0.700"/><rect x="14" y="14" width="8.500" height="8" fill="#5cae4c" stroke="#2d6a20" stroke-width="0.600"/><circle cx="17.500" cy="17.500" r="2" fill="none" stroke="#fff" stroke-width="1.100"/><path d="M19 19 L21 21" stroke="#fff" stroke-width="1.100"/></svg>
<svg class="a" style="left:1044.0px;top:93.5px;" width="24" height="24" viewBox="0 0 24 24"><circle cx="11" cy="11" r="9.500" fill="#5a84bc" stroke="#5a7494" stroke-width="0.900"/><path d="M1.500 11 H20.500 M3 6 H19 M3 16 H19 M11 1.500 V20.500 M11 1.500 Q4 11 11 20.500 M11 1.500 Q18 11 11 20.500" fill="none" stroke="#dce6f2" stroke-width="0.900"/><path d="M5 5 Q9 6 8 10 Q5 12 4 9 Z M13 4 Q17 5 16 9 Q13 10 13 4 Z M9 14 Q13 13 14 17 Q11 19 9 14 Z" fill="#4a6a94" opacity="0.700"/><circle cx="7.500" cy="19" r="4" fill="#111"/><circle cx="16.500" cy="19" r="4" fill="#111"/><rect x="7" y="14" width="10" height="5" fill="#111"/></svg>
<div class="a" style="left:1073px;top:90px;width:1px;height:32px;background:#d4d4d4;"></div>
<div class="a" style="left:1078px;top:93px;width:3px;height:26px;background-image:radial-gradient(circle,#b4b4b4 0.9px,transparent 1.2px);background-size:3px 4px;"></div>
<div class="a" style="left:5px;top:127px;width:3px;height:26px;background-image:radial-gradient(circle,#b4b4b4 0.9px,transparent 1.2px);background-size:3px 4px;"></div>
<svg class="a" style="left:15.0px;top:127.5px;" width="24" height="24" viewBox="0 0 24 24"><path d="M4 20 V8 Q4 4 8 4 H20" fill="none" stroke="#d0d0d0" stroke-width="1.600" stroke-dasharray="3 2"/><rect x="2" y="18" width="4" height="4" fill="#d8d8d8"/><rect x="18" y="2" width="4" height="4" fill="#d8d8d8"/></svg>
<svg class="a" style="left:45.0px;top:127.5px;" width="24" height="24" viewBox="0 0 24 24"><path d="M2.500 2.500 V21.500 H21.500 Z" fill="#dcdad6" stroke="#c8c6c2" stroke-width="1.200"/><path d="M7 11 V17.500 H14 Z" fill="#eee" stroke="#c8c6c2"/><path d="M17 2 H22 V21" fill="none" stroke="#d0d0d0"/></svg>
<svg class="a" style="left:78.0px;top:127.5px;" width="24" height="24" viewBox="0 0 24 24"><circle cx="4.500" cy="9" r="2.300" fill="#d8d8d8" stroke="#c8c8c8"/><circle cx="12" cy="4" r="2.300" fill="#d8d8d8" stroke="#c8c8c8"/><circle cx="19.500" cy="8" r="2.300" fill="#d8d8d8" stroke="#c8c8c8"/><rect x="10" y="12" width="10" height="10" rx="1" fill="#dcdcdc" stroke="#cacaca" stroke-width="0.7"/><path d="M12 17.0 H18 M15.0 14 V20" stroke="#f4f4f4" stroke-width="1.4"/></svg>
<svg class="a" style="left:107.5px;top:137.5px;" width="9" height="6" viewBox="0 0 9 6"><path d="M0 0 H9 L4.500 5 Z" fill="#777"/></svg>
<svg class="a" style="left:123.0px;top:127.5px;" width="24" height="24" viewBox="0 0 24 24"><path d="M3 9 Q3 3 10 4 Q15 5 19 3 Q23 4 21 9 Q18 13 13 12 Q9 12 8 16 Q5 20 3 16 Z" fill="#d4d4d4" stroke="#c2c2c2"/><rect x="13" y="13" width="9" height="9" rx="1" fill="#dcdcdc" stroke="#cacaca" stroke-width="0.7"/><path d="M15 17.5 H20 M17.5 15 V20" stroke="#f4f4f4" stroke-width="1.4"/></svg>
<svg class="a" style="left:154.0px;top:127.5px;" width="24" height="24" viewBox="0 0 24 24"><path d="M3 9 Q3 3 10 4 Q15 5 19 3 Q23 4 21 9 Q18 13 13 12 Q9 12 8 16 Q5 20 3 16 Z" fill="#d4d4d4" stroke="#c2c2c2"/></svg>
<svg class="a" style="left:185.0px;top:127.5px;" width="24" height="24" viewBox="0 0 24 24"><path d="M3 9 Q3 3 10 4 Q15 5 19 3 Q23 4 21 9 Q18 13 13 12 Q9 12 8 16 Q5 20 3 16 Z" fill="#d4d4d4" stroke="#c2c2c2"/><circle cx="9" cy="8" r="3" fill="#eaeaea" stroke="#c8c8c8"/><rect x="13" y="13" width="9" height="9" rx="1" fill="#dcdcdc" stroke="#cacaca" stroke-width="0.7"/><path d="M15 17.5 H20 M17.5 15 V20" stroke="#f4f4f4" stroke-width="1.4"/></svg>
<svg class="a" style="left:216.0px;top:127.5px;" width="24" height="24" viewBox="0 0 24 24"><path d="M3 9 Q3 3 10 4 Q15 5 19 3 Q23 4 21 9 Q18 13 13 12 Q9 12 8 16 Q5 20 3 16 Z" fill="#d4d4d4" stroke="#c2c2c2"/><circle cx="9" cy="8" r="3" fill="#eaeaea" stroke="#c8c8c8"/><rect x="13" y="13" width="9" height="9" rx="1" fill="#dcdcdc" stroke="#cacaca" stroke-width="0.7"/><path d="M15 17.5 H20 M17.5 15 V20" stroke="#f4f4f4" stroke-width="1.4"/></svg>
<svg class="a" style="left:247.0px;top:127.5px;" width="24" height="24" viewBox="0 0 24 24"><path d="M3 9 Q3 3 10 4 Q15 5 19 3 Q23 4 21 9 Q18 13 13 12 Q9 12 8 16 Q5 20 3 16 Z" fill="#d4d4d4" stroke="#c2c2c2"/><circle cx="9" cy="8" r="3" fill="#eaeaea" stroke="#c8c8c8"/><rect x="13" y="13" width="9" height="9" rx="1" fill="#dcdcdc" stroke="#cacaca" stroke-width="0.7"/><path d="M15 17.5 H20 M17.5 15 V20" stroke="#f4f4f4" stroke-width="1.4"/></svg>
<svg class="a" style="left:278.0px;top:127.5px;" width="24" height="24" viewBox="0 0 24 24"><path d="M3 9 Q3 3 10 4 Q15 5 19 3 Q23 4 21 9 Q18 13 13 12 Q9 12 8 16 Q5 20 3 16 Z" fill="#d4d4d4" stroke="#c2c2c2"/><rect x="13" y="13" width="9" height="9" rx="1" fill="#dcdcdc" stroke="#cacaca" stroke-width="0.7"/><path d="M15 17.5 H20 M17.5 15 V20" stroke="#f4f4f4" stroke-width="1.4"/></svg>
<svg class="a" style="left:309.0px;top:127.5px;" width="24" height="24" viewBox="0 0 24 24"><path d="M3 9 Q3 3 10 4 Q15 5 19 3 Q23 4 21 9 Q18 13 13 12 Q9 12 8 16 Q5 20 3 16 Z" fill="#d4d4d4" stroke="#c2c2c2"/><rect x="13" y="13" width="9" height="9" rx="1" fill="#dcdcdc" stroke="#cacaca" stroke-width="0.7"/><path d="M15 17.5 H20 M17.5 15 V20" stroke="#f4f4f4" stroke-width="1.4"/></svg>
<svg class="a" style="left:340.0px;top:127.5px;" width="24" height="24" viewBox="0 0 24 24"><path d="M3 6 Q3 3 8 3 H18 Q22 3 21 8 Q20 12 15 11 Q11 11 11 16 Q10 21 6 20 Q3 19 3 14 Z" fill="#d6d6d6" stroke="#c4c4c4"/></svg>
<svg class="a" style="left:371.0px;top:127.5px;" width="24" height="24" viewBox="0 0 24 24"><path d="M4 18 Q1 12 8 8 Q14 3 20 5 Q23 8 18 13 Q12 20 7 21 Q5 21 4 18 Z" fill="#d6d6d6" stroke="#c4c4c4"/></svg>
<svg class="a" style="left:402.0px;top:127.5px;" width="24" height="24" viewBox="0 0 24 24"><path d="M3 4 L9 19 L20 4" fill="none" stroke="#d0d0d0" stroke-width="1.3"/><circle cx="3" cy="4" r="1.8" fill="#fff" stroke="#d0d0d0"/><circle cx="9" cy="19" r="1.8" fill="#fff" stroke="#d0d0d0"/><circle cx="20" cy="4" r="1.8" fill="#fff" stroke="#d0d0d0"/><rect x="13" y="13" width="9" height="9" rx="1" fill="#dcdcdc" stroke="#cacaca" stroke-width="0.7"/><path d="M15 17.5 H20 M17.5 15 V20" stroke="#f4f4f4" stroke-width="1.4"/></svg>
<svg class="a" style="left:433.0px;top:127.5px;" width="24" height="24" viewBox="0 0 24 24"><path d="M9 2 V22 M2 14 H18" stroke="#d0d0d0" stroke-width="1.400"/><rect x="14" y="3" width="6" height="6" fill="#e4e4e4" stroke="#ccc"/><circle cx="9" cy="14" r="2" fill="#e4e4e4" stroke="#ccc"/></svg>
<svg class="a" style="left:464.0px;top:127.5px;" width="24" height="24" viewBox="0 0 24 24"><path d="M9 10 L4 21 M15 10 L20 21" stroke="#d0d0d0" stroke-width="2.200"/><ellipse cx="8" cy="6" rx="3.500" ry="4.500" fill="#dedede" stroke="#ccc"/><ellipse cx="16" cy="6" rx="3.500" ry="4.500" fill="#dedede" stroke="#ccc"/></svg>
<svg class="a" style="left:495.0px;top:127.5px;" width="24" height="24" viewBox="0 0 24 24"><path d="M9 10 L4 21 M15 10 L20 21" stroke="#d0d0d0" stroke-width="2.200"/><ellipse cx="8" cy="6" rx="3.500" ry="4.500" fill="#dedede" stroke="#ccc"/><ellipse cx="16" cy="6" rx="3.500" ry="4.500" fill="#dedede" stroke="#ccc"/></svg>
<svg class="a" style="left:526.0px;top:127.5px;" width="24" height="24" viewBox="0 0 24 24"><path d="M9 10 L4 21 M15 10 L20 21" stroke="#d0d0d0" stroke-width="2.200"/><ellipse cx="8" cy="6" rx="3.500" ry="4.500" fill="#dedede" stroke="#ccc"/><ellipse cx="16" cy="6" rx="3.500" ry="4.500" fill="#dedede" stroke="#ccc"/></svg>
<svg class="a" style="left:557.0px;top:127.5px;" width="24" height="24" viewBox="0 0 24 24"><path d="M3 5 H21 M3 9 H21 M3 13 H21 M3 17 H21 M3 21 H21 M12 3 V22" stroke="#d4d4d4" stroke-width="1.200"/></svg>
<svg class="a" style="left:588.0px;top:127.5px;" width="24" height="24" viewBox="0 0 24 24"><path d="M5 19 A9 9 0 0 1 17 6" fill="none" stroke="#d0d0d0" stroke-width="1.500"/><path d="M10 4 L18 12 L9 15 Z" fill="#e2e2e2" stroke="#ccc"/></svg>
<svg class="a" style="left:618.5px;top:137.5px;" width="9" height="6" viewBox="0 0 9 6"><path d="M0 0 H9 L4.500 5 Z" fill="#555"/></svg>
<div class="a" style="left:635px;top:124px;width:1px;height:32px;background:#d4d4d4;"></div>
<div class="a" style="left:640px;top:127px;width:3px;height:26px;background-image:radial-gradient(circle,#b4b4b4 0.9px,transparent 1.2px);background-size:3px 4px;"></div>
<div class="a" style="left:645px;top:124px;width:31px;height:31px;background:#cce4f7;border:1px solid #b4d8f4;"></div>
<svg class="a" style="left:649.5px;top:128.5px;" width="22" height="22" viewBox="0 0 24 24"><g transform="rotate(-40 12 12)"><path d="M4 3 H10 V12 Q10 15 12 15 Q14 15 14 12 V3 H20 V12 Q20 21 12 21 Q4 21 4 12 Z" fill="#d81818" stroke="#8a1010" stroke-width="0.800"/><path d="M4 3 H10 V7 H4 Z M14 3 H20 V7 H14 Z" fill="#f4f4f4" stroke="#8a1010" stroke-width="0.800"/></g></svg>
<svg class="a" style="left:680.0px;top:128.5px;" width="22" height="22" viewBox="0 0 24 24"><path d="M5 4 L10 20 L18 5 M10 20 L10 11" fill="none" stroke="#8fc08f" stroke-width="1.500"/><rect x="3.2" y="2.2" width="3.600" height="3.600" fill="#e8e8e8" stroke="#8a8a8a" stroke-width="0.800"/><rect x="10.2" y="1.2" width="3.600" height="3.600" fill="#e8e8e8" stroke="#8a8a8a" stroke-width="0.800"/><rect x="17.2" y="2.2" width="3.600" height="3.600" fill="#e8e8e8" stroke="#8a8a8a" stroke-width="0.800"/><rect x="6.2" y="10.2" width="3.600" height="3.600" fill="#e8e8e8" stroke="#8a8a8a" stroke-width="0.800"/><rect x="13.2" y="9.2" width="3.600" height="3.600" fill="#e8e8e8" stroke="#8a8a8a" stroke-width="0.800"/><rect x="8.2" y="18.2" width="3.600" height="3.600" fill="#e8e8e8" stroke="#8a8a8a" stroke-width="0.800"/><path d="M15 18 H22 L18.500 22 Z" fill="#111"/></svg>
<div class="a" style="left:707px;top:124px;width:31px;height:31px;background:#cce4f7;border:1px solid #b4d8f4;"></div>
<svg class="a" style="left:711.0px;top:128.5px;" width="22" height="22" viewBox="0 0 24 24"><path d="M4 5 L11 20 L20 5" fill="none" stroke="#8fc08f" stroke-width="1.600"/><path d="M15 18 H22 L18.500 22 Z" fill="#111"/></svg>
<div class="a" style="left:738px;top:129px;width:87px;height:22px;background:#fff;border:1px solid #7a7a7a;"></div>
<div class="a t " style="left:742px;top:131.0px;height:19px;line-height:19px;font-size:13px;color:#000;letter-spacing:-0.479px;">20</div>
<div class="a" style="left:809px;top:130px;width:15px;height:20px;background:#f0f0f0;"></div>
<svg class="a" style="left:812px;top:132px;" width="10" height="16" viewBox="0 0 10 16"><path d="M1.500 6 H8.500 L5 1.500 Z M1.500 10 H8.500 L5 14.500 Z" fill="#222"/></svg>
<div class="a" style="left:808.5px;top:130px;width:1px;height:20px;background:#d0d0d0;"></div>
<div class="a" style="left:826px;top:129px;width:105px;height:22px;background:#e4e4e4;border:1px solid #adadad;"></div>
<div class="a t " style="left:830px;top:131.0px;height:19px;line-height:19px;font-size:13px;color:#000;letter-spacing:-0.615px;">px</div>
<svg class="a" style="left:914px;top:137px;" width="12" height="8" viewBox="0 0 12 8"><path d="M1 1 L6 6 L11 1" fill="none" stroke="#333" stroke-width="1.200"/></svg>
<div class="a" style="left:931px;top:124px;width:31px;height:31px;background:#cce4f7;border:1px solid #b4d8f4;"></div>
<svg class="a" style="left:935.0px;top:128.5px;" width="22" height="22" viewBox="0 0 24 24"><path d="M9 2 L10.500 12 L21 7 M10.500 12 V22" fill="none" stroke="#8fc08f" stroke-width="1.600"/><rect x="8.7" y="10.2" width="3.600" height="3.600" fill="#e8e8e8" stroke="#8a8a8a" stroke-width="0.800"/></svg>
<svg class="a" style="left:967.0px;top:127.5px;" width="24" height="24" viewBox="0 0 24 24"><path d="M8 6 Q14 2 20 5 Q23 9 18 11 Q13 11 12 14 L8 12 Z" fill="#c8c8c8" stroke="#8a8a8a" stroke-width="0.700"/><circle cx="7" cy="8" r="4.800" fill="#d42020"/><path d="M7 14 Q9 12 13 14 L18 20 L12 22 Q6 20 7 14 Z" fill="#b4d4a4" stroke="#5a8a4a" stroke-width="0.700"/><path d="M15 19 H23 L19 23.500 Z" fill="#111"/></svg>
<div class="a" style="left:994px;top:124px;width:31px;height:31px;background:#cce4f7;border:1px solid #b4d8f4;"></div>
<svg class="a" style="left:999.0px;top:128.5px;" width="22" height="22" viewBox="0 0 24 24"><path d="M3 3 L21 21 M21 3 L3 21" stroke="#8fc08f" stroke-width="1.600"/><rect x="10.2" y="10.2" width="3.600" height="3.600" fill="#e8e8e8" stroke="#8a8a8a" stroke-width="0.800"/></svg>
<svg class="a" style="left:1029.0px;top:128.5px;" width="22" height="22" viewBox="0 0 24 24"><path d="M2 20 L21 4 M4 4 L20 21" stroke="#a8cc98" stroke-width="1.500"/><path d="M5 8 L13 10 L11 12.500 L19 16 L12 15 L14 12 Z" fill="#f2d020" stroke="#c9a810" stroke-width="0.600"/></svg>
<svg class="a" style="left:1058.5px;top:137.5px;" width="9" height="6" viewBox="0 0 9 6"><path d="M0 0 H9 L4.500 5 Z" fill="#222"/></svg>
<svg class="a" style="left:1072.0px;top:129.5px;" width="20" height="20" viewBox="0 0 24 24"><path d="M9 2 L10.500 12 L21 7 M10.500 12 V22" fill="none" stroke="#8fc08f" stroke-width="1.600"/><rect x="8.7" y="10.2" width="3.600" height="3.600" fill="#e8e8e8" stroke="#8a8a8a" stroke-width="0.800"/></svg>
<div class="a" style="left:8px;top:204.5px;width:34px;height:3px;background-image:radial-gradient(circle,#b4b4b4 0.9px,transparent 1.2px);background-size:4px 3px;"></div>
<div class="a" style="left:5px;top:165px;width:3px;height:34px;background-image:radial-gradient(circle,#b4b4b4 0.9px,transparent 1.2px);background-size:3px 4px;"></div>
<svg class="a" style="left:15.0px;top:170.0px;" width="24" height="24" viewBox="0 0 24 24"><rect x="2.500" y="3.500" width="14" height="13" fill="#f2dc3a" stroke="#222" stroke-width="1" stroke-dasharray="2 1.500"/><path d="M12 9 V22 L15 19 L17.500 23.500 L19.500 22.500 L17 18.200 L21 18 Z" fill="#fff" stroke="#222" stroke-width="0.900"/></svg>
<svg class="a" style="left:43.5px;top:179.5px;" width="9" height="6" viewBox="0 0 9 6"><path d="M0 0 H9 L4.500 5 Z" fill="#222"/></svg>
<div class="a" style="left:183px;top:157px;width:1px;height:13px;background:#d4d4d4;"></div>
<div class="a" style="left:186px;top:159px;width:3px;height:10px;background-image:radial-gradient(circle,#b4b4b4 0.9px,transparent 1.2px);background-size:3px 4px;"></div>
<div class="a" style="left:258px;top:157px;width:1px;height:13px;background:#d4d4d4;"></div>
<div class="a" style="left:261px;top:159px;width:3px;height:10px;background-image:radial-gradient(circle,#b4b4b4 0.9px,transparent 1.2px);background-size:3px 4px;"></div>
<div class="a" style="left:334px;top:157px;width:1px;height:13px;background:#d4d4d4;"></div>
<div class="a" style="left:337px;top:159px;width:3px;height:10px;background-image:radial-gradient(circle,#b4b4b4 0.9px,transparent 1.2px);background-size:3px 4px;"></div>
<svg class="a" style="left:406.0px;top:180.0px;" width="9" height="6" viewBox="0 0 9 6"><path d="M0 0 H9 L4.500 5 Z" fill="#666"/></svg>
<div class="a t " style="left:418px;top:172.2px;height:19.5px;line-height:19.5px;font-size:13.5px;color:#000;letter-spacing:-0.655px;">Band:</div>
<div class="a" style="left:452px;top:170px;width:36px;height:23px;background:#cfcfcf;border:1px solid #c4c4c4;"></div>
<div class="a t " style="left:456px;top:171.8px;height:19.5px;line-height:19.5px;font-size:13.5px;color:#9a9a9a;">1</div>
<svg class="a" style="left:472px;top:178px;" width="11" height="8" viewBox="0 0 11 8"><path d="M1 1 L5.500 5.500 L10 1" fill="none" stroke="#b0b0b0" stroke-width="1.200"/></svg>
<div class="a" style="left:498px;top:170px;width:51px;height:23px;background:#f0f0f0;border:1px solid #c8c8c8;"></div>
<div class="a t " style="left:502px;top:171.8px;height:19.5px;line-height:19.5px;font-size:13.5px;color:#8a8a8a;letter-spacing:0.369px;">0,0000</div>
<div class="a" style="left:563px;top:170px;width:24px;height:24px;background:#e6e6e6;"></div>
<svg class="a" style="left:564.0px;top:171.0px;" width="22" height="22" viewBox="0 0 24 24"><path d="M4 21 L5.500 15 L16 3 L20 6 L9.500 18.500 Z" fill="#dcdad4" stroke="#ccc" stroke-width="0.800"/></svg>
<div class="a" style="left:593px;top:170px;width:24px;height:24px;background:#e6e6e6;"></div>
<svg class="a" style="left:594.0px;top:171.0px;" width="22" height="22" viewBox="0 0 24 24"><path d="M4 10 L12 4 L20 12 L12 20 Z" fill="#d4d4d4" stroke="#c4c4c4"/><path d="M3 14 Q1 19 4 20 Q7 19 5 14 Z" fill="#c8c8c8"/></svg>
<div class="a" style="left:624px;top:170px;width:24px;height:24px;background:#e6e6e6;"></div>
<svg class="a" style="left:625.0px;top:171.0px;" width="22" height="22" viewBox="0 0 24 24"><path d="M3 16 L14 4 L21 10 L10 21 Z" fill="#d8d8d8" stroke="#c8c8c8"/><path d="M3 16 L8 11 L14 17 L10 21 Z" fill="#ececec" stroke="#c8c8c8"/></svg>
<div class="a" style="left:655px;top:170px;width:24px;height:24px;background:#e6e6e6;"></div>
<svg class="a" style="left:656.0px;top:171.0px;" width="22" height="22" viewBox="0 0 24 24"><text x="12" y="19" font-family="Liberation Serif, serif" font-size="22" text-anchor="middle" fill="#cfcfcf">ε</text></svg>
<div class="a" style="left:686px;top:170px;width:24px;height:24px;background:#e6e6e6;"></div>
<svg class="a" style="left:687.0px;top:171.0px;" width="22" height="22" viewBox="0 0 24 24"><path d="M2 17 Q6 2 11 12 Q15 22 21 6" fill="none" stroke="#d0d0d0" stroke-width="1.800"/><path d="M8 3 L14 21" stroke="#d8d8d8" stroke-width="1.200"/></svg>
<div class="a" style="left:717px;top:170px;width:24px;height:24px;background:#e6e6e6;"></div>
<svg class="a" style="left:718.0px;top:171.0px;" width="22" height="22" viewBox="0 0 24 24"><path d="M3 10 L10 4 V8 Q20 8 20 15 Q20 20 14 20 V17 Q17 17 17 14.500 Q17 12 10 12 V16 Z" fill="#d8d8d8" stroke="#ccc" stroke-width="0.700"/></svg>
<div class="a" style="left:748px;top:170px;width:24px;height:24px;background:#e6e6e6;"></div>
<svg class="a" style="left:749.0px;top:171.0px;" width="22" height="22" viewBox="0 0 24 24"><path d="M21 10 L14 4 V8 Q4 8 4 15 Q4 20 10 20 V17 Q7 17 7 14.500 Q7 12 14 12 V16 Z" fill="#d8d8d8" stroke="#ccc" stroke-width="0.700"/></svg>
<div class="a" style="left:779px;top:170px;width:24px;height:24px;background:#e6e6e6;"></div>
<svg class="a" style="left:780.0px;top:171.0px;" width="22" height="22" viewBox="0 0 24 24"><path d="M3 17 L8 12 L13 17 L8 22 Z M12 8 L17 3 L22 8 L17 13 Z" fill="#d4d4d4" stroke="#c4c4c4"/><path d="M8 8 L16 16" stroke="#c8c8c8" stroke-width="4"/></svg>
<svg class="a" style="left:810.0px;top:170.0px;" width="24" height="24" viewBox="0 0 24 24"><path d="M1 14 L6 4 L11 12 L14 7 L18 14 V22 H1 Z" fill="#8a8a8a"/><path d="M9 20 L18 10" stroke="#e8c020" stroke-width="3.400" stroke-linecap="round"/><path d="M16 5 Q19 2 22.500 4 L19.500 7 L20.500 9 L23.500 7.500 Q23.500 11 20 12 Q17 12 16 9 Z" fill="#cdd4dc" stroke="#555" stroke-width="0.800"/></svg>
<svg class="a" style="left:842.0px;top:170.0px;" width="24" height="24" viewBox="0 0 24 24"><rect x="1.500" y="2.500" width="6" height="20" fill="#2f9a50" stroke="#111" stroke-width="1"/><rect x="7.500" y="2.500" width="15" height="20" rx="1" fill="#3d72b8" stroke="#111" stroke-width="1"/><text x="15" y="18" font-family="Liberation Sans, sans-serif" font-size="15" font-weight="bold" text-anchor="middle" fill="#fff">?</text></svg>
<div class="a" style="left:871px;top:160px;width:1px;height:44px;background:#d4d4d4;"></div>
<div class="a" style="left:876px;top:162px;width:3px;height:40px;background-image:radial-gradient(circle,#b4b4b4 0.9px,transparent 1.2px);background-size:3px 4px;"></div>
<svg class="a" style="left:884px;top:176px;" width="11" height="11" viewBox="0 0 11 11"><path d="M0 2.500 H11 M0 6 H11 M0 9.500 H11" stroke="#111" stroke-width="2"/></svg>
<div class="a" style="left:896px;top:170px;width:47px;height:23px;background:#f0f0f0;border:1px solid #c8c8c8;"></div>
<div class="a t " style="left:900px;top:171.8px;height:19.5px;line-height:19.5px;font-size:13.5px;color:#7a7a7a;">1,00</div>
<svg class="a" style="left:931px;top:173px;" width="10" height="17" viewBox="0 0 10 17"><path d="M1.500 6.500 H8.500 L5 2 Z M1.500 10.500 H8.500 L5 15 Z" fill="#333"/></svg>
<div class="a" style="left:945px;top:170px;width:96px;height:23px;background:#cfcfcf;border:1px solid #c4c4c4;"></div>
<div class="a t " style="left:950px;top:171.8px;height:19.5px;line-height:19.5px;font-size:13.5px;color:#8f8f8f;letter-spacing:-0.281px;">map units</div>
<svg class="a" style="left:1024px;top:178px;" width="11" height="8" viewBox="0 0 11 8"><path d="M1 1 L5.500 5.500 L10 1" fill="none" stroke="#b0b0b0" stroke-width="1.200"/></svg>
<div class="a" style="left:1046px;top:170px;width:24px;height:24px;background:#e6e6e6;"></div>
<svg class="a" style="left:1047.0px;top:171.0px;" width="22" height="22" viewBox="0 0 24 24"><path d="M6 3 V20 L10 16.500 L13 22.500 L15.500 21.500 L12.500 15.500 L18 15 Z" fill="#e6e6e6" stroke="#cfcfcf" stroke-width="1"/></svg>
<div class="a" style="left:1076px;top:170px;width:12px;height:24px;background:#e6e6e6;"></div>
<div class="a" style="left:8px;top:208.5px;width:34px;height:3px;background-image:radial-gradient(circle,#b4b4b4 0.9px,transparent 1.2px);background-size:4px 3px;"></div>
<svg class="a" style="left:6.0px;top:220.0px;" width="24" height="24" viewBox="0 0 24 24"><path d="M3 4 L9 19 L20 4" fill="none" stroke="#333" stroke-width="1.3"/><circle cx="3" cy="4" r="1.8" fill="#fff" stroke="#333"/><circle cx="9" cy="19" r="1.8" fill="#fff" stroke="#333"/><circle cx="20" cy="4" r="1.8" fill="#fff" stroke="#333"/><rect x="14" y="14" width="9" height="9" rx="1.5" fill="#5cae4c" stroke="#3d8a30" stroke-width="0.6"/><path d="M18.5 15.6 V21.4 M15.6 18.5 H21.4" stroke="#fff" stroke-width="1.6"/></svg>
<svg class="a" style="left:6.0px;top:250.5px;" width="24" height="24" viewBox="0 0 24 24"><rect x="2.0" y="2.0" width="5.500" height="5.500" fill="#1f3f66"/><rect x="7.5" y="2.0" width="5.500" height="5.500" fill="#3d72b8"/><rect x="13.0" y="2.0" width="5.500" height="5.500" fill="#1f3f66"/><rect x="2.0" y="7.5" width="5.500" height="5.500" fill="#3d72b8"/><rect x="7.5" y="7.5" width="5.500" height="5.500" fill="#1f3f66"/><rect x="13.0" y="7.5" width="5.500" height="5.500" fill="#9fbbd9"/><rect x="2.0" y="13.0" width="5.500" height="5.500" fill="#1f3f66"/><rect x="7.5" y="13.0" width="5.500" height="5.500" fill="#9fbbd9"/><rect x="13.0" y="13.0" width="5.500" height="5.500" fill="#dfe8f2"/><rect x="14" y="14" width="9" height="9" rx="1.5" fill="#5cae4c" stroke="#3d8a30" stroke-width="0.6"/><path d="M18.5 15.6 V21.4 M15.6 18.5 H21.4" stroke="#fff" stroke-width="1.6"/></svg>
<svg class="a" style="left:6.0px;top:282.0px;" width="24" height="24" viewBox="0 0 24 24"><rect x="1.500" y="1.500" width="19" height="19" fill="#7aa4d4" stroke="#2d5a94"/><path d="M1.500 11 H20.500 M11 1.500 V20.500 M1.500 1.500 L11 11 L20.500 1.500 M11 11 L20.500 20.500" stroke="#2d5a94" stroke-width="0.900" fill="none"/><rect x="14" y="14" width="9" height="9" rx="1.5" fill="#5cae4c" stroke="#3d8a30" stroke-width="0.6"/><path d="M18.5 15.6 V21.4 M15.6 18.5 H21.4" stroke="#fff" stroke-width="1.6"/></svg>
<svg class="a" style="left:6.0px;top:312.0px;" width="24" height="24" viewBox="0 0 24 24"><path d="M9 3 Q15 3 15 9 Q15 16 6 18 Q11 14 10 11 Q5 11 5 7 Q5 3 9 3 Z" fill="#3d72b8" stroke="#2d5a94" stroke-width="0.600"/><rect x="14" y="14" width="9" height="9" rx="1.5" fill="#5cae4c" stroke="#3d8a30" stroke-width="0.6"/><path d="M18.5 15.6 V21.4 M15.6 18.5 H21.4" stroke="#fff" stroke-width="1.6"/></svg>
<svg class="a" style="left:6.0px;top:342.5px;" width="24" height="24" viewBox="0 0 24 24"><path d="M2 22 Q4 12 10 6 Q15 1.500 20 2 Q19 8 15 12 Q10 17 4 18 Z" fill="#5a8fc8" stroke="#2d5a94" stroke-width="0.800"/><path d="M2 22 Q7 13 18 4" stroke="#dce8f6" stroke-width="1" fill="none"/><rect x="14" y="14" width="9" height="9" rx="1.5" fill="#5cae4c" stroke="#3d8a30" stroke-width="0.6"/><path d="M18.5 15.6 V21.4 M15.6 18.5 H21.4" stroke="#fff" stroke-width="1.6"/></svg>
<svg class="a" style="left:6.0px;top:372.5px;" width="24" height="24" viewBox="0 0 24 24"><rect x="1.500" y="1.500" width="20" height="20" rx="2" fill="#a4c0e0" stroke="#3d6a9c" stroke-width="1"/><path d="M3 4 L9 19 L20 4" fill="none" stroke="#234" stroke-width="1.3"/><circle cx="3" cy="4" r="1.8" fill="#fff" stroke="#234"/><circle cx="9" cy="19" r="1.8" fill="#fff" stroke="#234"/><circle cx="20" cy="4" r="1.8" fill="#fff" stroke="#234"/><rect x="14" y="14" width="9" height="9" rx="1.5" fill="#5cae4c" stroke="#3d8a30" stroke-width="0.6"/><path d="M18.5 15.6 V21.4 M15.6 18.5 H21.4" stroke="#fff" stroke-width="1.6"/></svg>
<svg class="a" style="left:6.0px;top:400.0px;" width="24" height="24" viewBox="0 0 24 24"><path d="M4 4 Q4 1.500 9 2 Q16 1.500 18 6 Q19 11 16 14 V20 H12 V15 H9 V20 H5.500 V13 Q3 9 4 4 Z" fill="#4a80c0" stroke="#2d5a94" stroke-width="0.800"/><circle cx="8" cy="7" r="1.200" fill="#fff"/><rect x="14" y="14" width="9" height="9" rx="1.5" fill="#5cae4c" stroke="#3d8a30" stroke-width="0.6"/><path d="M18.5 15.6 V21.4 M15.6 18.5 H21.4" stroke="#fff" stroke-width="1.6"/></svg>
<svg class="a" style="left:6.0px;top:431.0px;" width="24" height="24" viewBox="0 0 24 24"><circle cx="11" cy="11" r="9" fill="#5a8fc8" stroke="#2d5a94" stroke-width="1"/><path d="M6 5 Q10 7 8 11 Q6 14 9 18 M13 3 Q16 8 14 12 Q17 15 15 19 M2.500 11 H19.500" fill="none" stroke="#cfe0f2" stroke-width="1.4"/><rect x="14" y="14" width="9" height="9" rx="1.5" fill="#5cae4c" stroke="#3d8a30" stroke-width="0.6"/><path d="M18.5 15.6 V21.4 M15.6 18.5 H21.4" stroke="#fff" stroke-width="1.6"/></svg>
<svg class="a" style="left:6.0px;top:461.0px;" width="24" height="24" viewBox="0 0 24 24"><circle cx="11" cy="11" r="9" fill="#2d5a94" stroke="#1a3a6a" stroke-width="1"/><path d="M2 11 H20 M11 2 V20 M4 6 Q11 9 18 6 M4 16 Q11 13 18 16 M11 2 Q5 11 11 20 M11 2 Q17 11 11 20" fill="none" stroke="#cfe0f2" stroke-width="1"/><rect x="14" y="14" width="9" height="9" rx="1.5" fill="#5cae4c" stroke="#3d8a30" stroke-width="0.6"/><path d="M18.5 15.6 V21.4 M15.6 18.5 H21.4" stroke="#fff" stroke-width="1.6"/></svg>
<svg class="a" style="left:6.0px;top:491.0px;" width="24" height="24" viewBox="0 0 24 24"><circle cx="11" cy="11" r="9.500" fill="#dce8f4" stroke="#5a7fa8" stroke-width="1"/><path d="M2 11 H20 M11 1.500 Q5 11 11 20.500 M11 1.500 Q17 11 11 20.500" fill="none" stroke="#8aa8c8" stroke-width="0.900"/><path d="M4 6 L9 16 L18 6" fill="none" stroke="#234" stroke-width="1.3"/><circle cx="4" cy="6" r="1.8" fill="#fff" stroke="#234"/><circle cx="9" cy="16" r="1.8" fill="#fff" stroke="#234"/><circle cx="18" cy="6" r="1.8" fill="#fff" stroke="#234"/><rect x="14" y="14" width="9" height="9" rx="1.5" fill="#5cae4c" stroke="#3d8a30" stroke-width="0.6"/><path d="M18.5 15.6 V21.4 M15.6 18.5 H21.4" stroke="#fff" stroke-width="1.6"/></svg>
<svg class="a" style="left:6.0px;top:522.0px;" width="24" height="24" viewBox="0 0 24 24"><path d="M3 4 L9 19 L20 4" fill="none" stroke="#333" stroke-width="1.3"/><circle cx="3" cy="4" r="1.8" fill="#fff" stroke="#333"/><circle cx="9" cy="19" r="1.8" fill="#fff" stroke="#333"/><circle cx="20" cy="4" r="1.8" fill="#fff" stroke="#333"/><rect x="13" y="13" width="9" height="9" rx="1" fill="#e8c530" stroke="#b8960f" stroke-width="0.7"/><path d="M17.5 14.5 V20.5 M14.5 17.5 H20.5 M15.2 15.2 L19.8 19.8 M19.8 15.2 L15.2 19.8" stroke="#fff" stroke-width="1.2"/></svg>
<svg class="a" style="left:12.0px;top:552.5px;" width="24" height="24" viewBox="0 0 24 24"><rect x="2" y="2" width="18" height="18" fill="#3d72b8"/><path d="M2 6.500 H20 M2 11 H20 M2 15.500 H20 M6.500 2 V20 M11 2 V20 M15.500 2 V20" stroke="#dce8f6" stroke-width="1"/><rect x="14" y="14" width="9" height="9" rx="1.5" fill="#5cae4c" stroke="#3d8a30" stroke-width="0.6"/><path d="M18.5 15.6 V21.4 M15.6 18.5 H21.4" stroke="#fff" stroke-width="1.6"/></svg>
<svg class="a" style="left:35.5px;top:411.5px;" width="9" height="6" viewBox="0 0 9 6"><path d="M0 0 H9 L4.500 5 Z" fill="#222"/></svg>
<svg class="a" style="left:35.5px;top:441.5px;" width="9" height="6" viewBox="0 0 9 6"><path d="M0 0 H9 L4.500 5 Z" fill="#222"/></svg>
<svg class="a" style="left:35.5px;top:501.5px;" width="9" height="6" viewBox="0 0 9 6"><path d="M0 0 H9 L4.500 5 Z" fill="#222"/></svg>
<svg class="a" style="left:35.5px;top:532.5px;" width="9" height="6" viewBox="0 0 9 6"><path d="M0 0 H9 L4.500 5 Z" fill="#222"/></svg>
<div class="a" style="left:50px;top:170px;width:346px;height:518px;background:#ffffff;box-shadow:0 1px 7px rgba(0,0,0,0.35);"></div>
<div class="a" style="left:50px;top:170px;width:346px;height:37px;background:#ffffff;"></div>
<div class="a t " style="left:59px;top:178.0px;height:22px;line-height:22px;font-size:16px;color:#a0a0a0;">Layer</div>
<div class="a" style="left:370px;top:178px;width:24px;height:24px;background:#e9e9e9;"></div>
<svg class="a" style="left:377px;top:185px;" width="10" height="10" viewBox="0 0 10 10"><path d="M1 1 L9 9 M9 1 L1 9" stroke="#f6f6f6" stroke-width="1.4"/></svg>
<div class="a" style="left:50px;top:207px;width:346px;height:26px;background:#f0f0f0;"></div>
<div class="a" style="left:50px;top:233px;width:346px;height:1px;background:#c8c8c8;"></div>
<svg class="a" style="left:55px;top:211px;" width="16" height="16" viewBox="0 0 16 16"><path d="M2 12 L8 7 L11 10 L5 14 Z" fill="#e8703a"/><path d="M8 7 L14 2" stroke="#d9a520" stroke-width="2.2"/><path d="M1 13 L6 15" stroke="#d33" stroke-width="2"/></svg>
<svg class="a" style="left:78px;top:210px;" width="16" height="18" viewBox="0 0 16 18"><rect x="2.5" y="6.5" width="10" height="9" rx="1" fill="#f4f4f4" stroke="#777"/><rect x="5.500" y="1.500" width="5" height="11" rx="1" fill="#fff" stroke="#777"/><rect x="9" y="11" width="6" height="6" fill="#5db04a"/><path d="M12 12 V16 M10 14 H14" stroke="#fff" stroke-width="1.2"/></svg>
<svg class="a" style="left:101px;top:212px;" width="18" height="14" viewBox="0 0 18 14"><path d="M1 6 Q8 -1 15 6 Q8 13 1 6 Z" fill="#dfe6ee" stroke="#7a8aa0"/><circle cx="8" cy="6" r="2.8" fill="#3c6aa8"/><path d="M9 10 H17 L13 14 Z" fill="#111"/></svg>
<svg class="a" style="left:124px;top:211px;" width="16" height="17" viewBox="0 0 16 17"><path d="M1 2 H15 L9.500 8 V15 L6.500 13 V8 Z" fill="#5a8fc8" stroke="#3d6ea8" stroke-width="0.8"/><rect x="1" y="1" width="14" height="3" fill="#e9d94a"/></svg>
<div class="a t " style="left:147px;top:205.5px;height:23px;line-height:23px;font-size:17px;color:#6a3a8a;font-family:'Liberation Serif',serif;">ε</div>
<svg class="a" style="left:155px;top:219px;" width="9" height="9" viewBox="0 0 9 9"><rect x="0.5" y="0.5" width="7" height="7" fill="#ddd" stroke="#999"/></svg>
<svg class="a" style="left:169px;top:216px;" width="10" height="6" viewBox="0 0 10 6"><path d="M0 0 H9 L4.5 5 Z" fill="#111"/></svg>
<svg class="a" style="left:185px;top:210px;" width="17" height="18" viewBox="0 0 17 18"><rect x="1.500" y="3.500" width="7" height="12" fill="#f8e9a0" stroke="#c9a227"/><path d="M11 1 V11 M7 8 L11 13 L15 8" fill="none" stroke="#3d6ea8" stroke-width="2.6"/></svg>
<svg class="a" style="left:208px;top:210px;" width="17" height="18" viewBox="0 0 17 18"><rect x="1.500" y="3.500" width="7" height="12" fill="#f8e9a0" stroke="#c9a227"/><path d="M11 15 V5 M7 8 L11 3 L15 8" fill="none" stroke="#3d6ea8" stroke-width="2.6"/></svg>
<svg class="a" style="left:231px;top:211px;" width="16" height="16" viewBox="0 0 16 16"><rect x="1.500" y="1.500" width="10" height="11" fill="#fff" stroke="#888"/><rect x="9" y="10" width="6" height="4" rx="1" fill="#d33"/></svg>
<div class="a" style="left:76px;top:234px;width:319px;height:24px;background:#d9d9d9;"></div>
<div class="a" style="left:50px;top:233px;width:345px;height:455px;overflow:hidden;">
<div class="a t" style="left:77px;top:2.5px;height:22px;line-height:22px;font-size:14.5px;font-weight:bold;text-decoration:underline;color:#000;letter-spacing:0.093px;">Funde_WT_2017_2019</div>
<div class="a t" style="left:77px;top:25.7px;height:22px;line-height:22px;font-size:14.5px;font-weight:bold;font-style:italic;color:#808080;letter-spacing:0.012px;">funde_nsg_1983_minus_1937</div>
<div class="a t" style="left:77px;top:47.6px;height:22px;line-height:22px;font-size:14.5px;font-weight:bold;font-style:italic;color:#808080;letter-spacing:-0.174px;">funde_strasse_wege</div>
<div class="a t" style="left:77px;top:69.6px;height:22px;line-height:22px;font-size:14.5px;font-weight:bold;font-style:italic;color:#808080;letter-spacing:-0.283px;">Funde_feucht_nass_wasser</div>
<div class="a t" style="left:77px;top:92.5px;height:22px;line-height:22px;font-size:14.5px;color:#111;letter-spacing:-0.486px;">Strasse_Wege</div>
<div class="a t" style="left:77px;top:116.5px;height:22px;line-height:22px;font-size:14.5px;color:#111;letter-spacing:-0.548px;">NSG_1937_und_1983</div>
<div class="a t" style="left:77px;top:140.5px;height:22px;line-height:22px;font-size:14.5px;color:#111;letter-spacing:0.008px;">Pflanzengesellschaften</div>
<div class="a t" style="left:77px;top:164.5px;height:22px;line-height:22px;font-size:14.5px;color:#111;letter-spacing:0.475px;">Biotope</div>
<div class="a t" style="left:77px;top:188.5px;height:22px;line-height:22px;font-size:14.5px;color:#111;letter-spacing:0.162px;">Baumfreie_offene_Moorbereiche</div>
<div class="a t" style="left:77px;top:212.5px;height:22px;line-height:22px;font-size:14.5px;color:#111;letter-spacing:-0.392px;">Feuchte_und_nasse_Bereiche</div>
<div class="a t" style="left:77px;top:235.0px;height:22px;line-height:22px;font-size:14.5px;font-weight:bold;font-style:italic;color:#808080;letter-spacing:0.174px;">Bodenarten</div>
<div class="a t" style="left:77px;top:257.2px;height:22px;line-height:22px;font-size:14.5px;font-weight:bold;font-style:italic;color:#808080;letter-spacing:0.012px;">WT_DGM1_rast</div>
<div class="a t" style="left:77px;top:279.3px;height:22px;line-height:22px;font-size:14.5px;font-weight:bold;font-style:italic;color:#808080;letter-spacing:-0.074px;">WT_DGM1_gpkg</div>
<div class="a t" style="left:77px;top:301.5px;height:22px;line-height:22px;font-size:14.5px;font-weight:bold;font-style:italic;color:#808080;letter-spacing:-0.058px;">WT_DGM1_xyz</div>
<div class="a t" style="left:77px;top:345.4px;height:22px;line-height:22px;font-size:14.5px;font-weight:bold;font-style:italic;color:#808080;letter-spacing:0.195px;">OpenStreetMap Standard</div>
<div class="a t" style="left:77px;top:367.5px;height:22px;line-height:22px;font-size:14.5px;font-weight:bold;font-style:italic;color:#808080;">WMS LGRB-BW BK50: Bodenkarte 1 : 50 000</div>
<div class="a t" style="left:77px;top:389.6px;height:22px;line-height:22px;font-size:14.5px;font-weight:bold;font-style:italic;color:#808080;">WMS LGRB-BW GK50: Geologische Karte</div>
<div class="a t" style="left:55px;top:323.6px;height:22px;line-height:22px;font-size:14.5px;font-weight:bold;color:#000;letter-spacing:0.098px;">Funde_WT_2017_2019</div>
</div>
<svg class="a" style="left:79px;top:239.0px;" width="15" height="15" viewBox="0 0 15 15"><rect x="0.5" y="0.5" width="14" height="14" fill="#fff" stroke="#333" stroke-width="1"/><path d="M3 7.5 L6 10.8 L12 3.8" fill="none" stroke="#222" stroke-width="1.4"/></svg>
<svg class="a" style="left:104px;top:240.5px;" width="12" height="12" viewBox="0 0 12 12"><circle cx="6" cy="6" r="3.1" fill="#1a2a3c"/></svg>
<svg class="a" style="left:79px;top:262.2px;" width="15" height="15" viewBox="0 0 15 15"><rect x="0.5" y="0.5" width="14" height="14" fill="#fff" stroke="#333" stroke-width="1"/></svg>
<svg class="a" style="left:104px;top:263.7px;" width="12" height="12" viewBox="0 0 12 12"><circle cx="6" cy="6" r="3.1" fill="#1a2a3c"/></svg>
<svg class="a" style="left:79px;top:284.1px;" width="15" height="15" viewBox="0 0 15 15"><rect x="0.5" y="0.5" width="14" height="14" fill="#fff" stroke="#333" stroke-width="1"/></svg>
<svg class="a" style="left:104px;top:285.6px;" width="12" height="12" viewBox="0 0 12 12"><circle cx="6" cy="6" r="4.6" fill="#111"/></svg>
<svg class="a" style="left:79px;top:306.1px;" width="15" height="15" viewBox="0 0 15 15"><rect x="0.5" y="0.5" width="14" height="14" fill="#fff" stroke="#333" stroke-width="1"/></svg>
<svg class="a" style="left:102px;top:305.6px;" width="16" height="16" viewBox="0 0 16 16"><circle cx="8" cy="8" r="7" fill="#fff" stroke="#111" stroke-width="1.2"/><circle cx="8" cy="8" r="2.6" fill="#111"/></svg>
<svg class="a" style="left:79px;top:329.0px;" width="15" height="15" viewBox="0 0 15 15"><rect x="0.5" y="0.5" width="14" height="14" fill="#fff" stroke="#333" stroke-width="1"/><path d="M3 7.5 L6 10.8 L12 3.8" fill="none" stroke="#222" stroke-width="1.4"/></svg>
<svg class="a" style="left:59px;top:330.5px;" width="8" height="12" viewBox="0 0 8 12"><path d="M1.5 1 L6.5 6 L1.5 11" fill="none" stroke="#a0a0a0" stroke-width="1.3"/></svg>
<svg class="a" style="left:102px;top:327.5px;" width="17" height="18" viewBox="0 0 17 18"><path d="M1.5 9.5 V16.5 H9.5" fill="none" stroke="#9a9a9a" stroke-width="1.2"/><rect x="4.5" y="5.5" width="10" height="9" rx="1.5" fill="#f4f4f4" stroke="#8a8a8a" stroke-width="1.2"/><rect x="7.5" y="1.5" width="5" height="10" rx="1.5" fill="#fff" stroke="#8a8a8a" stroke-width="1.2"/><path d="M10 4 V9" stroke="#6a6a6a" stroke-width="1.2"/></svg>
<svg class="a" style="left:79px;top:353.0px;" width="15" height="15" viewBox="0 0 15 15"><rect x="0.5" y="0.5" width="14" height="14" fill="#fff" stroke="#333" stroke-width="1"/><path d="M3 7.5 L6 10.8 L12 3.8" fill="none" stroke="#222" stroke-width="1.4"/></svg>
<svg class="a" style="left:59px;top:354.5px;" width="8" height="12" viewBox="0 0 8 12"><path d="M1.5 1 L6.5 6 L1.5 11" fill="none" stroke="#a0a0a0" stroke-width="1.3"/></svg>
<svg class="a" style="left:102px;top:351.5px;" width="17" height="18" viewBox="0 0 17 18"><path d="M1.5 9.5 V16.5 H9.5" fill="none" stroke="#9a9a9a" stroke-width="1.2"/><rect x="4.5" y="5.5" width="10" height="9" rx="1.5" fill="#f4f4f4" stroke="#8a8a8a" stroke-width="1.2"/><rect x="7.5" y="1.5" width="5" height="10" rx="1.5" fill="#fff" stroke="#8a8a8a" stroke-width="1.2"/><path d="M10 4 V9" stroke="#6a6a6a" stroke-width="1.2"/></svg>
<svg class="a" style="left:79px;top:377.0px;" width="15" height="15" viewBox="0 0 15 15"><rect x="0.5" y="0.5" width="14" height="14" fill="#fff" stroke="#333" stroke-width="1"/></svg>
<svg class="a" style="left:59px;top:378.5px;" width="8" height="12" viewBox="0 0 8 12"><path d="M1.5 1 L6.5 6 L1.5 11" fill="none" stroke="#a0a0a0" stroke-width="1.3"/></svg>
<svg class="a" style="left:102px;top:375.5px;" width="17" height="18" viewBox="0 0 17 18"><path d="M1.5 9.5 V16.5 H9.5" fill="none" stroke="#9a9a9a" stroke-width="1.2"/><rect x="4.5" y="5.5" width="10" height="9" rx="1.5" fill="#f4f4f4" stroke="#8a8a8a" stroke-width="1.2"/><rect x="7.5" y="1.5" width="5" height="10" rx="1.5" fill="#fff" stroke="#8a8a8a" stroke-width="1.2"/><path d="M10 4 V9" stroke="#6a6a6a" stroke-width="1.2"/></svg>
<svg class="a" style="left:79px;top:401.0px;" width="15" height="15" viewBox="0 0 15 15"><rect x="0.5" y="0.5" width="14" height="14" fill="#fff" stroke="#333" stroke-width="1"/></svg>
<svg class="a" style="left:59px;top:402.5px;" width="8" height="12" viewBox="0 0 8 12"><path d="M1.5 1 L6.5 6 L1.5 11" fill="none" stroke="#a0a0a0" stroke-width="1.3"/></svg>
<svg class="a" style="left:102px;top:399.5px;" width="17" height="18" viewBox="0 0 17 18"><path d="M1.5 9.5 V16.5 H9.5" fill="none" stroke="#9a9a9a" stroke-width="1.2"/><rect x="4.5" y="5.5" width="10" height="9" rx="1.5" fill="#f4f4f4" stroke="#8a8a8a" stroke-width="1.2"/><rect x="7.5" y="1.5" width="5" height="10" rx="1.5" fill="#fff" stroke="#8a8a8a" stroke-width="1.2"/><path d="M10 4 V9" stroke="#6a6a6a" stroke-width="1.2"/></svg>
<svg class="a" style="left:79px;top:425.0px;" width="15" height="15" viewBox="0 0 15 15"><rect x="0.5" y="0.5" width="14" height="14" fill="#fff" stroke="#333" stroke-width="1"/></svg>
<svg class="a" style="left:59px;top:426.5px;" width="8" height="12" viewBox="0 0 8 12"><path d="M1.5 1 L6.5 6 L1.5 11" fill="none" stroke="#a0a0a0" stroke-width="1.3"/></svg>
<svg class="a" style="left:102px;top:423.5px;" width="17" height="18" viewBox="0 0 17 18"><path d="M1.5 9.5 V16.5 H9.5" fill="none" stroke="#9a9a9a" stroke-width="1.2"/><rect x="4.5" y="5.5" width="10" height="9" rx="1.5" fill="#f4f4f4" stroke="#8a8a8a" stroke-width="1.2"/><rect x="7.5" y="1.5" width="5" height="10" rx="1.5" fill="#fff" stroke="#8a8a8a" stroke-width="1.2"/><path d="M10 4 V9" stroke="#6a6a6a" stroke-width="1.2"/></svg>
<svg class="a" style="left:79px;top:449.0px;" width="15" height="15" viewBox="0 0 15 15"><rect x="0.5" y="0.5" width="14" height="14" fill="#fff" stroke="#333" stroke-width="1"/><path d="M3 7.5 L6 10.8 L12 3.8" fill="none" stroke="#222" stroke-width="1.4"/></svg>
<svg class="a" style="left:59px;top:450.5px;" width="8" height="12" viewBox="0 0 8 12"><path d="M1.5 1 L6.5 6 L1.5 11" fill="none" stroke="#a0a0a0" stroke-width="1.3"/></svg>
<svg class="a" style="left:102px;top:447.5px;" width="17" height="18" viewBox="0 0 17 18"><path d="M1.5 9.5 V16.5 H9.5" fill="none" stroke="#9a9a9a" stroke-width="1.2"/><rect x="4.5" y="5.5" width="10" height="9" rx="1.5" fill="#f4f4f4" stroke="#8a8a8a" stroke-width="1.2"/><rect x="7.5" y="1.5" width="5" height="10" rx="1.5" fill="#fff" stroke="#8a8a8a" stroke-width="1.2"/><path d="M10 4 V9" stroke="#6a6a6a" stroke-width="1.2"/></svg>
<svg class="a" style="left:79px;top:471.5px;" width="15" height="15" viewBox="0 0 15 15"><rect x="0.5" y="0.5" width="14" height="14" fill="#fff" stroke="#333" stroke-width="1"/></svg>
<svg class="a" style="left:59px;top:473px;" width="8" height="12" viewBox="0 0 8 12"><path d="M1.5 1 L6.5 6 L1.5 11" fill="none" stroke="#a0a0a0" stroke-width="1.3"/></svg>
<svg class="a" style="left:101px;top:471px;" width="20" height="14" viewBox="0 0 20 14"><path d="M1 3 Q5 0 9 2 Q14 0 18 2 Q19 7 18 11 Q13 9 9 11 Q5 13 1 11 Q2 7 1 3 Z" fill="#e2e2e2" stroke="#aaa"/></svg>
<svg class="a" style="left:79px;top:493.7px;" width="15" height="15" viewBox="0 0 15 15"><rect x="0.5" y="0.5" width="14" height="14" fill="#fff" stroke="#333" stroke-width="1"/></svg>
<svg class="a" style="left:103px;top:493.2px;" width="16" height="16" viewBox="0 0 16 16"><rect x="0.5" y="0.5" width="5" height="5" fill="#1f3f66"/><rect x="5.5" y="0.5" width="5" height="5" fill="#dfe8f2"/><rect x="10.5" y="0.5" width="5" height="5" fill="#1f3f66"/><rect x="0.5" y="5.5" width="5" height="5" fill="#9fbbd9"/><rect x="5.5" y="5.5" width="5" height="5" fill="#1f3f66"/><rect x="10.5" y="5.5" width="5" height="5" fill="#dfe8f2"/><rect x="0.5" y="10.5" width="5" height="5" fill="#1f3f66"/><rect x="5.5" y="10.5" width="5" height="5" fill="#9fbbd9"/><rect x="10.5" y="10.5" width="5" height="5" fill="#bcd0e6"/></svg>
<svg class="a" style="left:79px;top:515.8px;" width="15" height="15" viewBox="0 0 15 15"><rect x="0.5" y="0.5" width="14" height="14" fill="#fff" stroke="#333" stroke-width="1"/></svg>
<svg class="a" style="left:104px;top:517.3px;" width="12" height="12" viewBox="0 0 12 12"><circle cx="6" cy="6" r="4.8" fill="#f39a1e" stroke="#8a5a10" stroke-width="0.9"/></svg>
<svg class="a" style="left:79px;top:538.0px;" width="15" height="15" viewBox="0 0 15 15"><rect x="0.5" y="0.5" width="14" height="14" fill="#fff" stroke="#333" stroke-width="1"/></svg>
<svg class="a" style="left:104px;top:539.5px;" width="12" height="12" viewBox="0 0 12 12"><circle cx="6" cy="6" r="4.8" fill="#c94a4a" stroke="#8a3030" stroke-width="0.9"/></svg>
<svg class="a" style="left:79px;top:581.9px;" width="15" height="15" viewBox="0 0 15 15"><rect x="0.5" y="0.5" width="14" height="14" fill="#fff" stroke="#333" stroke-width="1"/></svg>
<svg class="a" style="left:59px;top:583.4px;" width="8" height="12" viewBox="0 0 8 12"><path d="M1.5 1 L6.5 6 L1.5 11" fill="none" stroke="#a0a0a0" stroke-width="1.3"/></svg>
<svg class="a" style="left:103px;top:581.4px;" width="16" height="16" viewBox="0 0 16 16"><rect x="0.5" y="0.5" width="5" height="5" fill="#1f3f66"/><rect x="5.5" y="0.5" width="5" height="5" fill="#dfe8f2"/><rect x="10.5" y="0.5" width="5" height="5" fill="#1f3f66"/><rect x="0.5" y="5.5" width="5" height="5" fill="#9fbbd9"/><rect x="5.5" y="5.5" width="5" height="5" fill="#1f3f66"/><rect x="10.5" y="5.5" width="5" height="5" fill="#dfe8f2"/><rect x="0.5" y="10.5" width="5" height="5" fill="#1f3f66"/><rect x="5.5" y="10.5" width="5" height="5" fill="#9fbbd9"/><rect x="10.5" y="10.5" width="5" height="5" fill="#bcd0e6"/></svg>
<svg class="a" style="left:79px;top:604.0px;" width="15" height="15" viewBox="0 0 15 15"><rect x="0.5" y="0.5" width="14" height="14" fill="#fff" stroke="#333" stroke-width="1"/></svg>
<svg class="a" style="left:59px;top:605.5px;" width="8" height="12" viewBox="0 0 8 12"><path d="M1.5 1 L6.5 6 L1.5 11" fill="none" stroke="#a0a0a0" stroke-width="1.3"/></svg>
<svg class="a" style="left:103px;top:603.5px;" width="16" height="16" viewBox="0 0 16 16"><rect x="0.5" y="0.5" width="5" height="5" fill="#1f3f66"/><rect x="5.5" y="0.5" width="5" height="5" fill="#dfe8f2"/><rect x="10.5" y="0.5" width="5" height="5" fill="#1f3f66"/><rect x="0.5" y="5.5" width="5" height="5" fill="#9fbbd9"/><rect x="5.5" y="5.5" width="5" height="5" fill="#1f3f66"/><rect x="10.5" y="5.5" width="5" height="5" fill="#dfe8f2"/><rect x="0.5" y="10.5" width="5" height="5" fill="#1f3f66"/><rect x="5.5" y="10.5" width="5" height="5" fill="#9fbbd9"/><rect x="10.5" y="10.5" width="5" height="5" fill="#bcd0e6"/></svg>
<svg class="a" style="left:79px;top:626.1px;" width="15" height="15" viewBox="0 0 15 15"><rect x="0.5" y="0.5" width="14" height="14" fill="#fff" stroke="#333" stroke-width="1"/></svg>
<svg class="a" style="left:59px;top:627.6px;" width="8" height="12" viewBox="0 0 8 12"><path d="M1.5 1 L6.5 6 L1.5 11" fill="none" stroke="#a0a0a0" stroke-width="1.3"/></svg>
<svg class="a" style="left:103px;top:625.6px;" width="16" height="16" viewBox="0 0 16 16"><rect x="0.5" y="0.5" width="5" height="5" fill="#1f3f66"/><rect x="5.5" y="0.5" width="5" height="5" fill="#dfe8f2"/><rect x="10.5" y="0.5" width="5" height="5" fill="#1f3f66"/><rect x="0.5" y="5.5" width="5" height="5" fill="#9fbbd9"/><rect x="5.5" y="5.5" width="5" height="5" fill="#1f3f66"/><rect x="10.5" y="5.5" width="5" height="5" fill="#dfe8f2"/><rect x="0.5" y="10.5" width="5" height="5" fill="#1f3f66"/><rect x="5.5" y="10.5" width="5" height="5" fill="#9fbbd9"/><rect x="10.5" y="10.5" width="5" height="5" fill="#bcd0e6"/></svg>
<svg class="a" style="left:80px;top:558.5px;" width="18" height="18" viewBox="0 0 18 18"><rect x="0.500" y="0.500" width="17" height="17" rx="1.5" fill="#e6e6e6" stroke="#9a9a9a"/><path d="M3 5 H15 M3 9 H15 M3 13 H15 M7 3 V15" stroke="#9a9a9a" stroke-width="1.2"/></svg>
<div class="a" style="left:15px;top:688px;width:1898px;height:338px;background:#f0f0f0;border:1px solid #b8b8b8;"></div>
<div class="a" style="left:16px;top:689px;width:1896px;height:38px;background:#ffffff;"></div>
<svg class="a" style="left:25px;top:697px;" width="21" height="21" viewBox="0 0 20 20"><circle cx="9.5" cy="9.5" r="7" fill="none" stroke="#8cb53c" stroke-width="4.2"/><path d="M10 10 L19 19" stroke="#6c9a2a" stroke-width="4.5" stroke-linecap="butt"/><path d="M8.5 8.5 L13 13" stroke="#f0c419" stroke-width="2.6"/><circle cx="8.3" cy="8.3" r="1.6" fill="#f0c419"/></svg>
<div class="a t " style="left:54px;top:697.0px;height:21px;line-height:21px;font-size:15px;color:#8f8f8f;letter-spacing:0.182px;">Funde_WT_2017_2019 — Objekte gesamt:270, gefiltert: 270, gewählt: 188</div>
<svg class="a" style="left:18.0px;top:729.0px;" width="20" height="20" viewBox="0 0 24 24"><path d="M4 21 L5.500 14.500 L15.500 2.500 L20 6 L10 18 Z" fill="#f0d23c" stroke="#a88a10" stroke-width="0.900"/><path d="M4 21 L5.500 14.500 L10 18 Z" fill="#e8d8b0" stroke="#a88a10" stroke-width="0.700"/><path d="M4 21 L4.800 17.600 L7 19.300 Z" fill="#444"/><path d="M8 14.500 L17.500 3.500" stroke="#c9a820" stroke-width="1"/></svg>
<svg class="a" style="left:42.0px;top:729.0px;" width="20" height="20" viewBox="0 0 24 24"><rect x="3" y="4" width="15" height="16" fill="#dcdcdc" stroke="#ccc"/><path d="M9 19 L11 14 L19 4 L21.500 6 L13.500 16 Z" fill="#d6d2c8" stroke="#c4c0b6" stroke-width="0.700"/></svg>
<svg class="a" style="left:64.0px;top:729.0px;" width="20" height="20" viewBox="0 0 24 24"><rect x="3.500" y="3.500" width="17" height="17" rx="2" fill="#d8d8d8" stroke="#c8c8c8"/><rect x="6.500" y="4.500" width="11" height="7" fill="#ececec"/><rect x="7" y="14" width="10" height="6.500" fill="#c8c8c8"/></svg>
<svg class="a" style="left:88.0px;top:729.0px;" width="20" height="20" viewBox="0 0 24 24"><path d="M3 11 A9 9 0 0 1 19 6 L21.500 3.500 V11 H14 L16.500 8.500 A5.500 5.500 0 0 0 7 11 Z" fill="#3f88d8" stroke="#2666b0" stroke-width="0.600"/><path d="M21 13 A9 9 0 0 1 5 18 L2.500 20.500 V13 H10 L7.500 15.500 A5.500 5.500 0 0 0 17 13 Z" fill="#3f88d8" stroke="#2666b0" stroke-width="0.600"/></svg>
<svg class="a" style="left:118.0px;top:729.0px;" width="20" height="20" viewBox="0 0 24 24"><rect x="3" y="4" width="16" height="13" fill="#dcdcdc" stroke="#ccc"/><path d="M3 8.500 H19 M3 12.500 H19" stroke="#c8c8c8"/><path d="M14 17 H22 L18 22 Z" fill="#b8b8b8"/></svg>
<svg class="a" style="left:140.0px;top:729.0px;" width="20" height="20" viewBox="0 0 24 24"><path d="M5 8 H19 L17.500 21.500 H6.500 Z" fill="#dcd8d4" stroke="#ccc6c0"/><path d="M3.500 6.500 H20.500 M9 4 H15" stroke="#ccc6c0" stroke-width="1.800"/><path d="M9 10.500 V19 M12 10.500 V19 M15 10.500 V19" stroke="#c8c2bc" stroke-width="1"/></svg>
<svg class="a" style="left:164.0px;top:729.0px;" width="20" height="20" viewBox="0 0 24 24"><path d="M3 5 L17 15 M3 15 L17 5" stroke="#d4d4d4" stroke-width="1.800"/><circle cx="19" cy="6" r="2.600" fill="none" stroke="#d4d4d4" stroke-width="1.500"/><circle cx="19" cy="15" r="2.600" fill="none" stroke="#d4d4d4" stroke-width="1.500"/></svg>
<svg class="a" style="left:187.0px;top:729.0px;" width="20" height="20" viewBox="0 0 24 24"><path d="M5.500 7.500 H13.500 V20.500 H5.500 Z" fill="#eee" stroke="#b8b8b8"/><path d="M9.500 4.500 H15 L18.500 8 V17.500 H9.500 Z" fill="#f4f4f4" stroke="#a8a8a8"/></svg>
<svg class="a" style="left:210.0px;top:729.0px;" width="20" height="20" viewBox="0 0 24 24"><rect x="4.500" y="4.500" width="15" height="17" rx="1" fill="#e0e0e0" stroke="#ccc"/><rect x="8.500" y="2.500" width="7" height="4" fill="#d4d4d4" stroke="#c4c4c4"/><rect x="7" y="8.500" width="10" height="10.500" fill="#f2f2f2" stroke="#d0d0d0"/></svg>
<svg class="a" style="left:240.0px;top:729.0px;" width="20" height="20" viewBox="0 0 24 24"><text x="8" y="14" font-family="Liberation Serif, serif" font-size="19" text-anchor="middle" fill="#3a1a5a">ε</text><rect x="10.500" y="11.500" width="10" height="10" fill="#f6e04a" stroke="#c9a227"/></svg>
<svg class="a" style="left:263.0px;top:729.0px;" width="20" height="20" viewBox="0 0 24 24"><rect x="3" y="4" width="18" height="4.500" fill="#f2d230" stroke="#c9a227" stroke-width="0.700"/><rect x="3" y="10" width="18" height="4.500" fill="#f2d230" stroke="#c9a227" stroke-width="0.700"/><rect x="3" y="16" width="18" height="4.500" fill="#f2d230" stroke="#c9a227" stroke-width="0.700"/></svg>
<svg class="a" style="left:286.0px;top:729.0px;" width="20" height="20" viewBox="0 0 24 24"><rect x="3.500" y="4.500" width="17" height="15" fill="#fff" stroke="#888"/><path d="M3.500 4.500 L20.500 19.500 H3.500 Z" fill="#f2d230" stroke="#c9a227" stroke-width="0.700"/></svg>
<svg class="a" style="left:309.0px;top:729.0px;" width="20" height="20" viewBox="0 0 24 24"><rect x="3" y="4" width="10" height="9" fill="#f2d230" stroke="#c9a227" stroke-width="0.700"/><rect x="9" y="9" width="10" height="9" fill="#f2d230" stroke="#c9a227" stroke-width="0.700"/><circle cx="18.500" cy="18.500" r="4" fill="#fff" stroke="#d02020" stroke-width="1.400"/><path d="M16 21 L21 16" stroke="#d02020" stroke-width="1.400"/></svg>
<svg class="a" style="left:332.0px;top:729.0px;" width="20" height="20" viewBox="0 0 24 24"><path d="M3 4 H21 L14 12 V21 L10 18.500 V12 Z" fill="#5a8fc8" stroke="#3d6ea8" stroke-width="0.800"/><rect x="3" y="3" width="18" height="3.500" fill="#e9d94a"/></svg>
<svg class="a" style="left:355.0px;top:729.0px;" width="20" height="20" viewBox="0 0 24 24"><rect x="3.500" y="3.500" width="17" height="17" fill="#5a8fc8" stroke="#2d5a94"/><rect x="5" y="5" width="14" height="5" fill="#f2d230"/><path d="M12 17 V9 M9 12 L12 8.500 L15 12" stroke="#fff" stroke-width="1.800" fill="none"/><path d="M5 13 H19 M5 17 H19" stroke="#cfe0f2" stroke-width="0.800"/></svg>
<svg class="a" style="left:378.0px;top:729.0px;" width="20" height="20" viewBox="0 0 24 24"><rect x="8" y="8" width="8" height="8" fill="#f2dc3a" stroke="#c9a227" stroke-width="0.800"/><path d="M12 1.500 L16 6.500 H8 Z M12 22.500 L16 17.500 H8 Z M1.500 12 L6.500 8 V16 Z M22.500 12 L17.500 8 V16 Z" fill="#4a80c0" stroke="#2d5a94" stroke-width="0.600"/></svg>
<svg class="a" style="left:401.0px;top:729.0px;" width="20" height="20" viewBox="0 0 24 24"><rect x="3" y="3" width="9" height="10" fill="#f2dc3a" stroke="#c9a227" stroke-width="0.700"/><path d="M10 14 L3 21" stroke="#444" stroke-width="3.6" stroke-linecap="round"/><path d="M9.6 14.4 L3.4 20.6" stroke="#e8c530" stroke-width="2" stroke-linecap="round"/><circle cx="14.5" cy="9" r="6.8" fill="#f8f6e4" stroke="#555" stroke-width="1.4"/></svg>
<svg class="a" style="left:432.0px;top:729.0px;" width="20" height="20" viewBox="0 0 24 24"><rect x="4" y="4" width="7" height="16" fill="#dcdcdc" stroke="#ccc"/><rect x="11" y="4" width="7" height="16" fill="#e8e8e8" stroke="#ccc"/><rect x="13" y="13" width="9" height="9" rx="1" fill="#dcdcdc" stroke="#cacaca" stroke-width="0.7"/><path d="M15 17.5 H20 M17.5 15 V20" stroke="#f4f4f4" stroke-width="1.4"/></svg>
<svg class="a" style="left:455.0px;top:729.0px;" width="20" height="20" viewBox="0 0 24 24"><rect x="4" y="4" width="7" height="16" fill="#dcdcdc" stroke="#ccc"/><rect x="11" y="4" width="7" height="16" fill="#e8e8e8" stroke="#ccc"/><rect x="13" y="13" width="9" height="9" rx="1" fill="#dcdcdc" stroke="#cacaca" stroke-width="0.7"/><path d="M15 17.5 H20 M17.5 15 V20" stroke="#f4f4f4" stroke-width="1.4"/></svg>
<svg class="a" style="left:477.0px;top:729.0px;" width="20" height="20" viewBox="0 0 24 24"><rect x="3.500" y="3.500" width="16" height="17" fill="#e8eef6" stroke="#3d72b8"/><rect x="3.500" y="3.500" width="16" height="4" fill="#3d72b8"/><path d="M9 20 L10.500 15 L19 4.500 L22 7 L13.500 17.500 Z" fill="#e8702a" stroke="#a84a10" stroke-width="0.700"/><path d="M9 20 L10.500 15 L13.500 17.500 Z" fill="#f4e0c0"/></svg>
<svg class="a" style="left:500.0px;top:729.0px;" width="20" height="20" viewBox="0 0 24 24"><rect x="3.500" y="4.500" width="17" height="15" fill="#f4f0e4" stroke="#555"/><g fill="#c0392b"><circle cx="7" cy="8" r="1.600"/><circle cx="12" cy="8" r="1.600"/><circle cx="17" cy="8" r="1.600"/></g><g fill="#3d8a4a"><circle cx="7" cy="12" r="1.600"/><circle cx="12" cy="12" r="1.600"/><circle cx="17" cy="12" r="1.600"/></g><g fill="#555"><circle cx="7" cy="16" r="1.600"/><circle cx="12" cy="16" r="1.600"/><circle cx="17" cy="16" r="1.600"/></g></svg>
<svg class="a" style="left:530.0px;top:729.0px;" width="20" height="20" viewBox="0 0 24 24"><rect x="3" y="4" width="18" height="4.500" fill="#d04040"/><rect x="3" y="10" width="18" height="4.500" fill="#5cae4c"/><rect x="3" y="16" width="18" height="4.500" fill="#aaa"/><path d="M6 6.200 H12 M6 12.200 H15 M6 18.200 H10" stroke="#fff" stroke-width="1.400"/></svg>
<svg class="a" style="left:559.0px;top:729.0px;" width="20" height="20" viewBox="0 0 24 24"><rect x="3.500" y="4.500" width="17" height="15" fill="#f4f4f4" stroke="#555"/><rect x="3.500" y="4.500" width="17" height="3.500" fill="#556"/><rect x="6" y="11" width="8" height="8.500" fill="#9db8da" stroke="#3d72b8" stroke-width="0.800"/></svg>
<svg class="a" style="left:583.0px;top:729.0px;" width="20" height="20" viewBox="0 0 24 24"><path d="M10 14 L3 21" stroke="#444" stroke-width="3.6" stroke-linecap="round"/><path d="M9.6 14.4 L3.4 20.6" stroke="#888" stroke-width="2" stroke-linecap="round"/><circle cx="14.5" cy="9" r="6.8" fill="#dfe8f2" stroke="#4a6a9a" stroke-width="1.4"/><circle cx="14.500" cy="9" r="3.500" fill="#4a80c0"/><path d="M17 15 L22 22" stroke="#888" stroke-width="1.500"/></svg>
<div class="a" style="left:113px;top:729px;width:1px;height:20px;background:#d0d0d0;"></div>
<div class="a" style="left:235px;top:729px;width:1px;height:20px;background:#d0d0d0;"></div>
<div class="a" style="left:427px;top:729px;width:1px;height:20px;background:#d0d0d0;"></div>
<div class="a" style="left:525px;top:729px;width:1px;height:20px;background:#d0d0d0;"></div>
<div class="a" style="left:555px;top:729px;width:1px;height:20px;background:#d0d0d0;"></div>
<div class="a" style="left:16px;top:751px;width:1896px;height:1px;background:#a8a8a8;"></div>
<div class="a" style="left:16px;top:752px;width:1895px;height:240px;background:#ffffff;"></div>
<div class="a" style="left:54px;top:753px;width:1px;height:50px;background:#e2e2e2;"></div>
<div class="a" style="left:118px;top:753px;width:1px;height:50px;background:#e2e2e2;"></div>
<div class="a" style="left:214px;top:753px;width:1px;height:50px;background:#e2e2e2;"></div>
<div class="a" style="left:432px;top:753px;width:1px;height:50px;background:#e2e2e2;"></div>
<div class="a" style="left:557px;top:753px;width:1px;height:50px;background:#e2e2e2;"></div>
<div class="a" style="left:682px;top:753px;width:1px;height:50px;background:#e2e2e2;"></div>
<div class="a" style="left:807px;top:753px;width:1px;height:50px;background:#e2e2e2;"></div>
<div class="a" style="left:951px;top:753px;width:1px;height:50px;background:#e2e2e2;"></div>
<div class="a" style="left:1024px;top:753px;width:1px;height:50px;background:#e2e2e2;"></div>
<div class="a" style="left:1149px;top:753px;width:1px;height:50px;background:#e2e2e2;"></div>
<div class="a" style="left:1274px;top:753px;width:1px;height:50px;background:#e2e2e2;"></div>
<div class="a" style="left:1398px;top:753px;width:1px;height:50px;background:#e2e2e2;"></div>
<div class="a" style="left:1456px;top:753px;width:1px;height:50px;background:#e2e2e2;"></div>
<div class="a" style="left:1504px;top:753px;width:1px;height:50px;background:#e2e2e2;"></div>
<div class="a" style="left:1580px;top:753px;width:1px;height:50px;background:#e2e2e2;"></div>
<div class="a" style="left:1650px;top:753px;width:1px;height:50px;background:#e2e2e2;"></div>
<div class="a" style="left:1718px;top:753px;width:1px;height:50px;background:#e2e2e2;"></div>
<svg class="a" style="left:318px;top:753px;" width="12" height="6" viewBox="0 0 12 6"><path d="M1 5 L6 1 L11 5" fill="none" stroke="#555" stroke-width="1"/></svg>
<div class="a t " style="left:53.6px;top:768.0px;height:22px;line-height:22px;font-size:14.5px;color:#111;width:64.9px;text-align:center;">id</div>
<div class="a t " style="left:118.5px;top:768.0px;height:22px;line-height:22px;font-size:14.5px;color:#111;width:95.9px;text-align:center;">funddatum</div>
<div class="a t " style="left:214.4px;top:768.0px;height:22px;line-height:22px;font-size:14.5px;color:#111;width:217.99999999999997px;text-align:center;">artname</div>
<div class="a t " style="left:432.4px;top:768.0px;height:22px;line-height:22px;font-size:14.5px;color:#111;width:124.60000000000002px;text-align:center;">gattung</div>
<div class="a t " style="left:557px;top:768.0px;height:22px;line-height:22px;font-size:14.5px;color:#111;width:125.5px;text-align:center;">epithet</div>
<div class="a t " style="left:682.5px;top:768.0px;height:22px;line-height:22px;font-size:14.5px;color:#111;width:124.5px;text-align:center;">autor</div>
<div class="a t " style="left:807px;top:768.0px;height:22px;line-height:22px;font-size:14.5px;color:#111;width:143.70000000000005px;text-align:center;">deut_name</div>
<div class="a t " style="left:950.7px;top:768.0px;height:22px;line-height:22px;font-size:14.5px;color:#111;width:72.89999999999998px;text-align:center;">lebensw</div>
<div class="a t " style="left:1023.6px;top:768.0px;height:22px;line-height:22px;font-size:14.5px;color:#111;width:125.10000000000002px;text-align:center;">wgs_84_dec</div>
<div class="a t " style="left:1148.7px;top:768.0px;height:22px;line-height:22px;font-size:14.5px;color:#111;width:125.0px;text-align:center;">y_lat</div>
<div class="a t " style="left:1273.7px;top:768.0px;height:22px;line-height:22px;font-size:14.5px;color:#111;width:124.29999999999995px;text-align:center;">x_lon</div>
<div class="a t " style="left:1398px;top:768.0px;height:22px;line-height:22px;font-size:14.5px;color:#111;width:57.5px;text-align:center;">biotop</div>
<div class="a t " style="left:1455.5px;top:768.0px;height:22px;line-height:22px;font-size:14.5px;color:#111;width:48.90000000000009px;text-align:center;">biot_nr</div>
<div class="a t " style="left:1504.4px;top:768.0px;height:22px;line-height:22px;font-size:14.5px;color:#111;width:75.79999999999995px;text-align:center;">pfl_ges</div>
<div class="a t " style="left:1580.2px;top:768.0px;height:22px;line-height:22px;font-size:14.5px;color:#111;width:69.29999999999995px;text-align:center;">weg_grabe</div>
<div class="a t " style="left:1649.5px;top:768.0px;height:22px;line-height:22px;font-size:14.5px;color:#111;width:68.90000000000009px;text-align:center;">begleit</div>
<div class="a t " style="left:1718.4px;top:768.0px;height:22px;line-height:22px;font-size:14.5px;color:#111;width:159.5999999999999px;text-align:center;">baum</div>
<div class="a t " style="left:22px;top:811.8px;height:20.5px;line-height:20.5px;font-size:14.5px;color:#111;">19</div>
<div class="a" style="left:54px;top:803px;width:1824px;height:36px;background:#0078d7;"></div>
<div class="a" style="left:54px;top:839px;width:1824px;height:1px;background:#a8d2f3;"></div>
<div class="a t " style="left:57.6px;top:811.0px;height:22px;line-height:22px;font-size:14.5px;color:#fff;width:59.900000000000006px;overflow:hidden;">w19014</div>
<div class="a t " style="left:118.5px;top:811.0px;height:22px;line-height:22px;font-size:14.5px;color:#fff;width:92.4px;text-align:right;overflow:hidden;">2019-08-24</div>
<div class="a t " style="left:218.4px;top:811.0px;height:22px;line-height:22px;font-size:14.5px;color:#fff;width:212.99999999999997px;overflow:hidden;">Boletus edulis</div>
<div class="a t " style="left:436.4px;top:811.0px;height:22px;line-height:22px;font-size:14.5px;color:#fff;width:119.60000000000002px;overflow:hidden;">Boletus</div>
<div class="a t " style="left:561px;top:811.0px;height:22px;line-height:22px;font-size:14.5px;color:#fff;width:120.5px;overflow:hidden;">edulis</div>
<div class="a t " style="left:686.5px;top:811.0px;height:22px;line-height:22px;font-size:14.5px;color:#fff;width:119.5px;overflow:hidden;">Bull. : Fr.&nbsp; 1782</div>
<div class="a t " style="left:811px;top:811.0px;height:22px;line-height:22px;font-size:14.5px;color:#fff;width:138.70000000000005px;overflow:hidden;">Fichten-Steinpilz</div>
<div class="a t " style="left:958.2px;top:811.0px;height:22px;line-height:22px;font-size:14.5px;color:#fff;width:64.89999999999998px;overflow:hidden;">myk</div>
<div class="a t " style="left:1027.6px;top:811.0px;height:22px;line-height:22px;font-size:14.5px;color:#fff;width:120.10000000000002px;overflow:hidden;letter-spacing:-0.25px;">48.729900,8.641...</div>
<div class="a t " style="left:1148.7px;top:811.0px;height:22px;line-height:22px;font-size:14.5px;color:#fff;width:121.5px;text-align:right;overflow:hidden;letter-spacing:-0.15px;">48,7299000000...</div>
<div class="a t " style="left:1273.7px;top:811.0px;height:22px;line-height:22px;font-size:14.5px;color:#fff;width:120.79999999999995px;text-align:right;overflow:hidden;letter-spacing:-0.15px;">8,64166500000...</div>
<div class="a t " style="left:1402px;top:811.0px;height:22px;line-height:22px;font-size:14.5px;color:#fff;width:52.5px;overflow:hidden;">held</div>
<div class="a t " style="left:1459.5px;top:811.0px;height:22px;line-height:22px;font-size:14.5px;color:#fff;width:43.90000000000009px;overflow:hidden;">31.30</div>
<div class="a t " style="left:1508.4px;top:811.0px;height:22px;line-height:22px;font-size:14.5px;color:#fff;width:70.79999999999995px;overflow:hidden;">vpn</div>
<div class="a t " style="left:1584.2px;top:811.0px;height:22px;line-height:22px;font-size:14.5px;color:#fff;width:64.29999999999995px;overflow:hidden;">gra</div>
<div class="a t " style="left:1653.5px;top:811.0px;height:22px;line-height:22px;font-size:14.5px;color:#fff;width:63.90000000000009px;overflow:hidden;"><i>NULL</i></div>
<div class="a t " style="left:1722.4px;top:811.0px;height:22px;line-height:22px;font-size:14.5px;color:#fff;width:154.5999999999999px;overflow:hidden;"><i>NULL</i></div>
<div class="a" style="left:118px;top:803px;width:1px;height:36px;background:#7dbcef;"></div>
<div class="a" style="left:214px;top:803px;width:1px;height:36px;background:#7dbcef;"></div>
<div class="a" style="left:432px;top:803px;width:1px;height:36px;background:#7dbcef;"></div>
<div class="a" style="left:557px;top:803px;width:1px;height:36px;background:#7dbcef;"></div>
<div class="a" style="left:682px;top:803px;width:1px;height:36px;background:#7dbcef;"></div>
<div class="a" style="left:807px;top:803px;width:1px;height:36px;background:#7dbcef;"></div>
<div class="a" style="left:951px;top:803px;width:1px;height:36px;background:#7dbcef;"></div>
<div class="a" style="left:1024px;top:803px;width:1px;height:36px;background:#7dbcef;"></div>
<div class="a" style="left:1149px;top:803px;width:1px;height:36px;background:#7dbcef;"></div>
<div class="a" style="left:1274px;top:803px;width:1px;height:36px;background:#7dbcef;"></div>
<div class="a" style="left:1398px;top:803px;width:1px;height:36px;background:#7dbcef;"></div>
<div class="a" style="left:1456px;top:803px;width:1px;height:36px;background:#7dbcef;"></div>
<div class="a" style="left:1504px;top:803px;width:1px;height:36px;background:#7dbcef;"></div>
<div class="a" style="left:1580px;top:803px;width:1px;height:36px;background:#7dbcef;"></div>
<div class="a" style="left:1650px;top:803px;width:1px;height:36px;background:#7dbcef;"></div>
<div class="a" style="left:1718px;top:803px;width:1px;height:36px;background:#7dbcef;"></div>
<div class="a t " style="left:22px;top:848.8px;height:20.5px;line-height:20.5px;font-size:14.5px;color:#111;">20</div>
<div class="a" style="left:54px;top:840px;width:1824px;height:36px;background:#0078d7;"></div>
<div class="a" style="left:54px;top:876px;width:1824px;height:1px;background:#a8d2f3;"></div>
<div class="a t " style="left:57.6px;top:848.0px;height:22px;line-height:22px;font-size:14.5px;color:#fff;width:59.900000000000006px;overflow:hidden;">w17151</div>
<div class="a t " style="left:118.5px;top:848.0px;height:22px;line-height:22px;font-size:14.5px;color:#fff;width:92.4px;text-align:right;overflow:hidden;">2017-10-05</div>
<div class="a t " style="left:218.4px;top:848.0px;height:22px;line-height:22px;font-size:14.5px;color:#fff;width:212.99999999999997px;overflow:hidden;">Boletus edulis</div>
<div class="a t " style="left:436.4px;top:848.0px;height:22px;line-height:22px;font-size:14.5px;color:#fff;width:119.60000000000002px;overflow:hidden;">Boletus</div>
<div class="a t " style="left:561px;top:848.0px;height:22px;line-height:22px;font-size:14.5px;color:#fff;width:120.5px;overflow:hidden;">edulis</div>
<div class="a t " style="left:686.5px;top:848.0px;height:22px;line-height:22px;font-size:14.5px;color:#fff;width:119.5px;overflow:hidden;">Bull. : Fr.&nbsp; 1782</div>
<div class="a t " style="left:811px;top:848.0px;height:22px;line-height:22px;font-size:14.5px;color:#fff;width:138.70000000000005px;overflow:hidden;">Steinpilz</div>
<div class="a t " style="left:958.2px;top:848.0px;height:22px;line-height:22px;font-size:14.5px;color:#fff;width:64.89999999999998px;overflow:hidden;">myk</div>
<div class="a t " style="left:1027.6px;top:848.0px;height:22px;line-height:22px;font-size:14.5px;color:#fff;width:120.10000000000002px;overflow:hidden;letter-spacing:-0.25px;">48.73104,8.65123</div>
<div class="a t " style="left:1148.7px;top:848.0px;height:22px;line-height:22px;font-size:14.5px;color:#fff;width:121.5px;text-align:right;overflow:hidden;letter-spacing:-0.15px;">48,7310400000...</div>
<div class="a t " style="left:1273.7px;top:848.0px;height:22px;line-height:22px;font-size:14.5px;color:#fff;width:120.79999999999995px;text-align:right;overflow:hidden;letter-spacing:-0.15px;">8,65123000000...</div>
<div class="a t " style="left:1402px;top:848.0px;height:22px;line-height:22px;font-size:14.5px;color:#fff;width:52.5px;overflow:hidden;">miwd</div>
<div class="a t " style="left:1459.5px;top:848.0px;height:22px;line-height:22px;font-size:14.5px;color:#fff;width:43.90000000000009px;overflow:hidden;">59.22</div>
<div class="a t " style="left:1508.4px;top:848.0px;height:22px;line-height:22px;font-size:14.5px;color:#fff;width:70.79999999999995px;overflow:hidden;"><i>NULL</i></div>
<div class="a t " style="left:1584.2px;top:848.0px;height:22px;line-height:22px;font-size:14.5px;color:#fff;width:64.29999999999995px;overflow:hidden;"><i>NULL</i></div>
<div class="a t " style="left:1653.5px;top:848.0px;height:22px;line-height:22px;font-size:14.5px;color:#fff;width:63.90000000000009px;overflow:hidden;"><i>NULL</i></div>
<div class="a t " style="left:1722.4px;top:848.0px;height:22px;line-height:22px;font-size:14.5px;color:#fff;width:154.5999999999999px;overflow:hidden;">Betula pubescens, Fa...</div>
<div class="a" style="left:118px;top:840px;width:1px;height:36px;background:#7dbcef;"></div>
<div class="a" style="left:214px;top:840px;width:1px;height:36px;background:#7dbcef;"></div>
<div class="a" style="left:432px;top:840px;width:1px;height:36px;background:#7dbcef;"></div>
<div class="a" style="left:557px;top:840px;width:1px;height:36px;background:#7dbcef;"></div>
<div class="a" style="left:682px;top:840px;width:1px;height:36px;background:#7dbcef;"></div>
<div class="a" style="left:807px;top:840px;width:1px;height:36px;background:#7dbcef;"></div>
<div class="a" style="left:951px;top:840px;width:1px;height:36px;background:#7dbcef;"></div>
<div class="a" style="left:1024px;top:840px;width:1px;height:36px;background:#7dbcef;"></div>
<div class="a" style="left:1149px;top:840px;width:1px;height:36px;background:#7dbcef;"></div>
<div class="a" style="left:1274px;top:840px;width:1px;height:36px;background:#7dbcef;"></div>
<div class="a" style="left:1398px;top:840px;width:1px;height:36px;background:#7dbcef;"></div>
<div class="a" style="left:1456px;top:840px;width:1px;height:36px;background:#7dbcef;"></div>
<div class="a" style="left:1504px;top:840px;width:1px;height:36px;background:#7dbcef;"></div>
<div class="a" style="left:1580px;top:840px;width:1px;height:36px;background:#7dbcef;"></div>
<div class="a" style="left:1650px;top:840px;width:1px;height:36px;background:#7dbcef;"></div>
<div class="a" style="left:1718px;top:840px;width:1px;height:36px;background:#7dbcef;"></div>
<div class="a t " style="left:22px;top:885.8px;height:20.5px;line-height:20.5px;font-size:14.5px;color:#111;">21</div>
<div class="a" style="left:54px;top:877px;width:1824px;height:36px;background:#0078d7;"></div>
<div class="a" style="left:54px;top:913px;width:1824px;height:1px;background:#a8d2f3;"></div>
<div class="a t " style="left:57.6px;top:885.0px;height:22px;line-height:22px;font-size:14.5px;color:#fff;width:59.900000000000006px;overflow:hidden;">w17060</div>
<div class="a t " style="left:118.5px;top:885.0px;height:22px;line-height:22px;font-size:14.5px;color:#fff;width:92.4px;text-align:right;overflow:hidden;">2017-09-06</div>
<div class="a t " style="left:218.4px;top:885.0px;height:22px;line-height:22px;font-size:14.5px;color:#fff;width:212.99999999999997px;overflow:hidden;">Caloboletus calopus</div>
<div class="a t " style="left:436.4px;top:885.0px;height:22px;line-height:22px;font-size:14.5px;color:#fff;width:119.60000000000002px;overflow:hidden;">Caloboletus</div>
<div class="a t " style="left:561px;top:885.0px;height:22px;line-height:22px;font-size:14.5px;color:#fff;width:120.5px;overflow:hidden;">calopus</div>
<div class="a t " style="left:686.5px;top:885.0px;height:22px;line-height:22px;font-size:14.5px;color:#fff;width:119.5px;overflow:hidden;">(Pers.) Vizzini&nbsp; 2...</div>
<div class="a t " style="left:811px;top:885.0px;height:22px;line-height:22px;font-size:14.5px;color:#fff;width:138.70000000000005px;overflow:hidden;">Schönfuß-Röhrling</div>
<div class="a t " style="left:958.2px;top:885.0px;height:22px;line-height:22px;font-size:14.5px;color:#fff;width:64.89999999999998px;overflow:hidden;">myk</div>
<div class="a t " style="left:1027.6px;top:885.0px;height:22px;line-height:22px;font-size:14.5px;color:#fff;width:120.10000000000002px;overflow:hidden;letter-spacing:-0.25px;">48.73083,8.64941</div>
<div class="a t " style="left:1148.7px;top:885.0px;height:22px;line-height:22px;font-size:14.5px;color:#fff;width:121.5px;text-align:right;overflow:hidden;letter-spacing:-0.15px;">48,7308299999...</div>
<div class="a t " style="left:1273.7px;top:885.0px;height:22px;line-height:22px;font-size:14.5px;color:#fff;width:120.79999999999995px;text-align:right;overflow:hidden;letter-spacing:-0.15px;">8,64941000000...</div>
<div class="a t " style="left:1402px;top:885.0px;height:22px;line-height:22px;font-size:14.5px;color:#fff;width:52.5px;overflow:hidden;">miwd</div>
<div class="a t " style="left:1459.5px;top:885.0px;height:22px;line-height:22px;font-size:14.5px;color:#fff;width:43.90000000000009px;overflow:hidden;">59.22</div>
<div class="a t " style="left:1508.4px;top:885.0px;height:22px;line-height:22px;font-size:14.5px;color:#fff;width:70.79999999999995px;overflow:hidden;"><i>NULL</i></div>
<div class="a t " style="left:1584.2px;top:885.0px;height:22px;line-height:22px;font-size:14.5px;color:#fff;width:64.29999999999995px;overflow:hidden;"><i>NULL</i></div>
<div class="a t " style="left:1653.5px;top:885.0px;height:22px;line-height:22px;font-size:14.5px;color:#fff;width:63.90000000000009px;overflow:hidden;"><i>NULL</i></div>
<div class="a t " style="left:1722.4px;top:885.0px;height:22px;line-height:22px;font-size:14.5px;color:#fff;width:154.5999999999999px;overflow:hidden;">Fagus sylvatica, Abies...</div>
<div class="a" style="left:118px;top:877px;width:1px;height:36px;background:#7dbcef;"></div>
<div class="a" style="left:214px;top:877px;width:1px;height:36px;background:#7dbcef;"></div>
<div class="a" style="left:432px;top:877px;width:1px;height:36px;background:#7dbcef;"></div>
<div class="a" style="left:557px;top:877px;width:1px;height:36px;background:#7dbcef;"></div>
<div class="a" style="left:682px;top:877px;width:1px;height:36px;background:#7dbcef;"></div>
<div class="a" style="left:807px;top:877px;width:1px;height:36px;background:#7dbcef;"></div>
<div class="a" style="left:951px;top:877px;width:1px;height:36px;background:#7dbcef;"></div>
<div class="a" style="left:1024px;top:877px;width:1px;height:36px;background:#7dbcef;"></div>
<div class="a" style="left:1149px;top:877px;width:1px;height:36px;background:#7dbcef;"></div>
<div class="a" style="left:1274px;top:877px;width:1px;height:36px;background:#7dbcef;"></div>
<div class="a" style="left:1398px;top:877px;width:1px;height:36px;background:#7dbcef;"></div>
<div class="a" style="left:1456px;top:877px;width:1px;height:36px;background:#7dbcef;"></div>
<div class="a" style="left:1504px;top:877px;width:1px;height:36px;background:#7dbcef;"></div>
<div class="a" style="left:1580px;top:877px;width:1px;height:36px;background:#7dbcef;"></div>
<div class="a" style="left:1650px;top:877px;width:1px;height:36px;background:#7dbcef;"></div>
<div class="a" style="left:1718px;top:877px;width:1px;height:36px;background:#7dbcef;"></div>
<div class="a t " style="left:22px;top:922.8px;height:20.5px;line-height:20.5px;font-size:14.5px;color:#111;">22</div>
<div class="a" style="left:54px;top:914px;width:1824px;height:36px;background:#f5f5f5;"></div>
<div class="a" style="left:54px;top:950px;width:1824px;height:1px;background:#e0e0e0;"></div>
<div class="a t " style="left:57.6px;top:922.0px;height:22px;line-height:22px;font-size:14.5px;color:#111;width:59.900000000000006px;overflow:hidden;">w17011</div>
<div class="a t " style="left:118.5px;top:922.0px;height:22px;line-height:22px;font-size:14.5px;color:#111;width:92.4px;text-align:right;overflow:hidden;">2017-08-19</div>
<div class="a t " style="left:218.4px;top:922.0px;height:22px;line-height:22px;font-size:14.5px;color:#111;width:212.99999999999997px;overflow:hidden;">Calocera viscosa</div>
<div class="a t " style="left:436.4px;top:922.0px;height:22px;line-height:22px;font-size:14.5px;color:#111;width:119.60000000000002px;overflow:hidden;">Calocera</div>
<div class="a t " style="left:561px;top:922.0px;height:22px;line-height:22px;font-size:14.5px;color:#111;width:120.5px;overflow:hidden;">viscosa</div>
<div class="a t " style="left:686.5px;top:922.0px;height:22px;line-height:22px;font-size:14.5px;color:#111;width:119.5px;overflow:hidden;">(Pers. : Fr.) Fr.&nbsp; 1...</div>
<div class="a t " style="left:811px;top:922.0px;height:22px;line-height:22px;font-size:14.5px;color:#111;width:138.70000000000005px;overflow:hidden;">Klebriger Hörnling</div>
<div class="a t " style="left:958.2px;top:922.0px;height:22px;line-height:22px;font-size:14.5px;color:#111;width:64.89999999999998px;overflow:hidden;">lig</div>
<div class="a t " style="left:1027.6px;top:922.0px;height:22px;line-height:22px;font-size:14.5px;color:#111;width:120.10000000000002px;overflow:hidden;letter-spacing:-0.25px;">48.73131,8.65021</div>
<div class="a t " style="left:1148.7px;top:922.0px;height:22px;line-height:22px;font-size:14.5px;color:#111;width:121.5px;text-align:right;overflow:hidden;letter-spacing:-0.15px;">48,7313100000...</div>
<div class="a t " style="left:1273.7px;top:922.0px;height:22px;line-height:22px;font-size:14.5px;color:#111;width:120.79999999999995px;text-align:right;overflow:hidden;letter-spacing:-0.15px;">8,65021000000...</div>
<div class="a t " style="left:1402px;top:922.0px;height:22px;line-height:22px;font-size:14.5px;color:#111;width:52.5px;overflow:hidden;">miwd</div>
<div class="a t " style="left:1459.5px;top:922.0px;height:22px;line-height:22px;font-size:14.5px;color:#111;width:43.90000000000009px;overflow:hidden;">59.22</div>
<div class="a t " style="left:1508.4px;top:922.0px;height:22px;line-height:22px;font-size:14.5px;color:#8a8a8a;width:70.79999999999995px;overflow:hidden;"><i>NULL</i></div>
<div class="a t " style="left:1584.2px;top:922.0px;height:22px;line-height:22px;font-size:14.5px;color:#8a8a8a;width:64.29999999999995px;overflow:hidden;"><i>NULL</i></div>
<div class="a t " style="left:1653.5px;top:922.0px;height:22px;line-height:22px;font-size:14.5px;color:#8a8a8a;width:63.90000000000009px;overflow:hidden;"><i>NULL</i></div>
<div class="a t " style="left:1722.4px;top:922.0px;height:22px;line-height:22px;font-size:14.5px;color:#111;width:154.5999999999999px;overflow:hidden;">Abies alba, Picea abi...</div>
<div class="a" style="left:118px;top:914px;width:1px;height:36px;background:#e4e0dc;"></div>
<div class="a" style="left:214px;top:914px;width:1px;height:36px;background:#e4e0dc;"></div>
<div class="a" style="left:432px;top:914px;width:1px;height:36px;background:#e4e0dc;"></div>
<div class="a" style="left:557px;top:914px;width:1px;height:36px;background:#e4e0dc;"></div>
<div class="a" style="left:682px;top:914px;width:1px;height:36px;background:#e4e0dc;"></div>
<div class="a" style="left:807px;top:914px;width:1px;height:36px;background:#e4e0dc;"></div>
<div class="a" style="left:951px;top:914px;width:1px;height:36px;background:#e4e0dc;"></div>
<div class="a" style="left:1024px;top:914px;width:1px;height:36px;background:#e4e0dc;"></div>
<div class="a" style="left:1149px;top:914px;width:1px;height:36px;background:#e4e0dc;"></div>
<div class="a" style="left:1274px;top:914px;width:1px;height:36px;background:#e4e0dc;"></div>
<div class="a" style="left:1398px;top:914px;width:1px;height:36px;background:#e4e0dc;"></div>
<div class="a" style="left:1456px;top:914px;width:1px;height:36px;background:#e4e0dc;"></div>
<div class="a" style="left:1504px;top:914px;width:1px;height:36px;background:#e4e0dc;"></div>
<div class="a" style="left:1580px;top:914px;width:1px;height:36px;background:#e4e0dc;"></div>
<div class="a" style="left:1650px;top:914px;width:1px;height:36px;background:#e4e0dc;"></div>
<div class="a" style="left:1718px;top:914px;width:1px;height:36px;background:#e4e0dc;"></div>
<div class="a t " style="left:22px;top:959.8px;height:20.5px;line-height:20.5px;font-size:14.5px;color:#111;">23</div>
<div class="a" style="left:54px;top:951px;width:1824px;height:36px;background:#0078d7;"></div>
<div class="a" style="left:54px;top:987px;width:1824px;height:1px;background:#a8d2f3;"></div>
<div class="a t " style="left:57.6px;top:959.0px;height:22px;line-height:22px;font-size:14.5px;color:#fff;width:59.900000000000006px;overflow:hidden;">w17091</div>
<div class="a t " style="left:118.5px;top:959.0px;height:22px;line-height:22px;font-size:14.5px;color:#fff;width:92.4px;text-align:right;overflow:hidden;">2017-09-21</div>
<div class="a t " style="left:218.4px;top:959.0px;height:22px;line-height:22px;font-size:14.5px;color:#fff;width:212.99999999999997px;overflow:hidden;">Cantharellus cibarius</div>
<div class="a t " style="left:436.4px;top:959.0px;height:22px;line-height:22px;font-size:14.5px;color:#fff;width:119.60000000000002px;overflow:hidden;">Cantharellus</div>
<div class="a t " style="left:561px;top:959.0px;height:22px;line-height:22px;font-size:14.5px;color:#fff;width:120.5px;overflow:hidden;">cibarius</div>
<div class="a t " style="left:686.5px;top:959.0px;height:22px;line-height:22px;font-size:14.5px;color:#fff;width:119.5px;overflow:hidden;">Fr. 1821</div>
<div class="a t " style="left:811px;top:959.0px;height:22px;line-height:22px;font-size:14.5px;color:#fff;width:138.70000000000005px;overflow:hidden;">Pfifferling, Eiersch...</div>
<div class="a t " style="left:958.2px;top:959.0px;height:22px;line-height:22px;font-size:14.5px;color:#fff;width:64.89999999999998px;overflow:hidden;">myk</div>
<div class="a t " style="left:1027.6px;top:959.0px;height:22px;line-height:22px;font-size:14.5px;color:#fff;width:120.10000000000002px;overflow:hidden;letter-spacing:-0.25px;">48.73113,8.64997</div>
<div class="a t " style="left:1148.7px;top:959.0px;height:22px;line-height:22px;font-size:14.5px;color:#fff;width:121.5px;text-align:right;overflow:hidden;letter-spacing:-0.15px;">48,7311300000...</div>
<div class="a t " style="left:1273.7px;top:959.0px;height:22px;line-height:22px;font-size:14.5px;color:#fff;width:120.79999999999995px;text-align:right;overflow:hidden;letter-spacing:-0.15px;">8,64997000000...</div>
<div class="a t " style="left:1402px;top:959.0px;height:22px;line-height:22px;font-size:14.5px;color:#fff;width:52.5px;overflow:hidden;">miwd</div>
<div class="a t " style="left:1459.5px;top:959.0px;height:22px;line-height:22px;font-size:14.5px;color:#fff;width:43.90000000000009px;overflow:hidden;">59.22</div>
<div class="a t " style="left:1508.4px;top:959.0px;height:22px;line-height:22px;font-size:14.5px;color:#fff;width:70.79999999999995px;overflow:hidden;"><i>NULL</i></div>
<div class="a t " style="left:1584.2px;top:959.0px;height:22px;line-height:22px;font-size:14.5px;color:#fff;width:64.29999999999995px;overflow:hidden;">weg</div>
<div class="a t " style="left:1653.5px;top:959.0px;height:22px;line-height:22px;font-size:14.5px;color:#fff;width:63.90000000000009px;overflow:hidden;"><i>NULL</i></div>
<div class="a t " style="left:1722.4px;top:959.0px;height:22px;line-height:22px;font-size:14.5px;color:#fff;width:154.5999999999999px;overflow:hidden;"><i>NULL</i></div>
<div class="a" style="left:118px;top:951px;width:1px;height:36px;background:#7dbcef;"></div>
<div class="a" style="left:214px;top:951px;width:1px;height:36px;background:#7dbcef;"></div>
<div class="a" style="left:432px;top:951px;width:1px;height:36px;background:#7dbcef;"></div>
<div class="a" style="left:557px;top:951px;width:1px;height:36px;background:#7dbcef;"></div>
<div class="a" style="left:682px;top:951px;width:1px;height:36px;background:#7dbcef;"></div>
<div class="a" style="left:807px;top:951px;width:1px;height:36px;background:#7dbcef;"></div>
<div class="a" style="left:951px;top:951px;width:1px;height:36px;background:#7dbcef;"></div>
<div class="a" style="left:1024px;top:951px;width:1px;height:36px;background:#7dbcef;"></div>
<div class="a" style="left:1149px;top:951px;width:1px;height:36px;background:#7dbcef;"></div>
<div class="a" style="left:1274px;top:951px;width:1px;height:36px;background:#7dbcef;"></div>
<div class="a" style="left:1398px;top:951px;width:1px;height:36px;background:#7dbcef;"></div>
<div class="a" style="left:1456px;top:951px;width:1px;height:36px;background:#7dbcef;"></div>
<div class="a" style="left:1504px;top:951px;width:1px;height:36px;background:#7dbcef;"></div>
<div class="a" style="left:1580px;top:951px;width:1px;height:36px;background:#7dbcef;"></div>
<div class="a" style="left:1650px;top:951px;width:1px;height:36px;background:#7dbcef;"></div>
<div class="a" style="left:1718px;top:951px;width:1px;height:36px;background:#7dbcef;"></div>
<div class="a" style="left:54px;top:988px;width:1824px;height:4px;background:#0078d7;"></div>
<div class="a" style="left:118px;top:988px;width:1px;height:4px;background:#7dbcef;"></div>
<div class="a" style="left:214px;top:988px;width:1px;height:4px;background:#7dbcef;"></div>
<div class="a" style="left:432px;top:988px;width:1px;height:4px;background:#7dbcef;"></div>
<div class="a" style="left:557px;top:988px;width:1px;height:4px;background:#7dbcef;"></div>
<div class="a" style="left:682px;top:988px;width:1px;height:4px;background:#7dbcef;"></div>
<div class="a" style="left:807px;top:988px;width:1px;height:4px;background:#7dbcef;"></div>
<div class="a" style="left:951px;top:988px;width:1px;height:4px;background:#7dbcef;"></div>
<div class="a" style="left:1024px;top:988px;width:1px;height:4px;background:#7dbcef;"></div>
<div class="a" style="left:1149px;top:988px;width:1px;height:4px;background:#7dbcef;"></div>
<div class="a" style="left:1274px;top:988px;width:1px;height:4px;background:#7dbcef;"></div>
<div class="a" style="left:1398px;top:988px;width:1px;height:4px;background:#7dbcef;"></div>
<div class="a" style="left:1456px;top:988px;width:1px;height:4px;background:#7dbcef;"></div>
<div class="a" style="left:1504px;top:988px;width:1px;height:4px;background:#7dbcef;"></div>
<div class="a" style="left:1580px;top:988px;width:1px;height:4px;background:#7dbcef;"></div>
<div class="a" style="left:1650px;top:988px;width:1px;height:4px;background:#7dbcef;"></div>
<div class="a" style="left:1718px;top:988px;width:1px;height:4px;background:#7dbcef;"></div>
<div class="a" style="left:1878px;top:752px;width:34px;height:240px;background:#ffffff;"></div>
<div class="a" style="left:1890px;top:752px;width:22px;height:240px;background:#f0f0f0;"></div>
<svg class="a" style="left:1894px;top:980px;" width="12" height="8" viewBox="0 0 12 8"><path d="M1 1 L6 6 L11 1" fill="none" stroke="#444" stroke-width="1.8"/></svg>
<div class="a" style="left:16px;top:992px;width:1896px;height:1px;background:#c8c8c8;"></div>
<div class="a" style="left:20px;top:997px;width:161px;height:24px;background:#e1e1e1;border:1px solid #adadad;"></div>
<svg class="a" style="left:26px;top:1000px;" width="16" height="18" viewBox="0 0 16 18"><path d="M1 2 H15 L9.500 9 V17 L6.500 15 V9 Z" fill="#5a8fc8" stroke="#3d6ea8" stroke-width="0.8"/><rect x="0.5" y="1" width="15" height="3" fill="#e9d94a"/></svg>
<div class="a t " style="left:49px;top:999.8px;height:19.5px;line-height:19.5px;font-size:13.5px;color:#000;letter-spacing:-0.349px;">Alle Objekte anzeigen</div>
<svg class="a" style="left:171px;top:1012px;" width="8" height="5" viewBox="0 0 8 5"><path d="M0 0 H8 L4 5 Z" fill="#111"/></svg>
<svg class="a" style="left:1860px;top:1002px;" width="18" height="18" viewBox="0 0 18 18"><rect x="0.500" y="0.500" width="16" height="16" fill="#f4f8fc" stroke="#b8c4d0"/><rect x="6" y="3" width="8" height="4" rx="2" fill="#fff" stroke="#789"/><rect x="6" y="10" width="8" height="4" rx="2" fill="#fff" stroke="#789"/><path d="M2 5 H6 M2 12 H6" stroke="#456" stroke-width="1.4"/></svg>
<div class="a" style="left:1882px;top:996px;width:27px;height:27px;background:#cce4f7;border:1px solid #a6cdf0;"></div>
<svg class="a" style="left:1888px;top:1002px;" width="17" height="17" viewBox="0 0 17 17"><rect x="0.500" y="0.500" width="15" height="15" fill="#eef3f8" stroke="#8aa0b8"/><rect x="1" y="1" width="14" height="3.5" fill="#a8bcd2"/><path d="M2 7.500 H14 M2 10.500 H14 M2 13.500 H14 M5.500 5 V15" stroke="#8aa0b8" stroke-width="1"/></svg>
<div class="a" style="left:1082px;top:86px;width:840px;height:737px;background:rgba(0,0,0,0.12);"></div>
<div class="a" style="left:1083.5px;top:87px;width:840px;height:734px;background:#f0f0f0;border:1.5px solid #787878;"></div>
<div class="a" style="left:1085px;top:88px;width:835px;height:37px;background:#ffffff;"></div>
<svg class="a" style="left:1093px;top:96px;" width="21" height="21" viewBox="0 0 20 20"><circle cx="9.5" cy="9.5" r="7" fill="none" stroke="#8cb53c" stroke-width="4.2"/><path d="M10 10 L19 19" stroke="#6c9a2a" stroke-width="4.5" stroke-linecap="butt"/><path d="M8.5 8.5 L13 13" stroke="#f0c419" stroke-width="2.6"/><circle cx="8.3" cy="8.3" r="1.6" fill="#f0c419"/></svg>
<div class="a t " style="left:1118px;top:95.8px;height:21.5px;line-height:21.5px;font-size:15.5px;color:#111;letter-spacing:-0.003px;">Funde_WT_2017_2019 — mit Ausdruck wählen</div>
<svg class="a" style="left:1895px;top:100px;" width="13" height="13" viewBox="0 0 13 13"><path d="M0.500 0.500 L12.500 12.500 M12.500 0.500 L0.500 12.500" stroke="#222" stroke-width="1.2"/></svg>
<div class="a" style="left:1085px;top:151px;width:835px;height:1px;background:#d0d0d0;"></div>
<div class="a" style="left:1088px;top:128px;width:83px;height:24px;background:#ffffff;border:1px solid #dcdcdc;border-bottom:none;"></div>
<div class="a" style="left:1170px;top:130px;width:114px;height:22px;background:#f0f0f0;border:1px solid #d9d9d9;border-bottom:none;"></div>
<div class="a t " style="left:1102px;top:131.2px;height:19.5px;line-height:19.5px;font-size:13.5px;color:#000;letter-spacing:-0.409px;">Ausdruck</div>
<div class="a t " style="left:1184px;top:132.2px;height:19.5px;line-height:19.5px;font-size:13.5px;color:#000;letter-spacing:-0.353px;">Funktionseditor</div>
<div class="a" style="left:1099px;top:164.5px;width:25px;height:23.5px;background:#e3e3e3;border:1px solid #bdbdbd;"></div>
<div class="a" style="left:1128px;top:164.5px;width:25px;height:23.5px;background:#e3e3e3;border:1px solid #bdbdbd;"></div>
<div class="a" style="left:1157px;top:164.5px;width:25px;height:23.5px;background:#d2d2d2;border:1px solid #cfcfcf;"></div>
<div class="a" style="left:1186px;top:164.5px;width:25px;height:23.5px;background:#d2d2d2;border:1px solid #cfcfcf;"></div>
<div class="a" style="left:1215px;top:164.5px;width:25px;height:23.5px;background:#e3e3e3;border:1px solid #bdbdbd;"></div>
<div class="a" style="left:1244px;top:164.5px;width:25px;height:23.5px;background:#e3e3e3;border:1px solid #bdbdbd;"></div>
<svg class="a" style="left:1104px;top:167px;" width="15" height="19" viewBox="0 0 15 19"><path d="M1.500 1.500 H9.500 L13.500 5.500 V17.500 H1.500 Z" fill="#fff" stroke="#888"/><path d="M9.500 1.500 V5.500 H13.500" fill="none" stroke="#888"/></svg>
<svg class="a" style="left:1132px;top:167px;" width="18" height="18" viewBox="0 0 18 18"><rect x="1" y="1" width="16" height="16" rx="2" fill="#4a7fc0" stroke="#2d5a94"/><rect x="4" y="2" width="10" height="6" fill="#e6eef8"/><rect x="4" y="11" width="10" height="6" fill="#2d5a94"/><rect x="6" y="12.500" width="3" height="3" fill="#e6eef8"/></svg>
<svg class="a" style="left:1162px;top:167px;" width="16" height="18" viewBox="0 0 16 18"><path d="M3 16 L5 10 L12 2 L14 4 L7 12 Z" fill="#e0e0e0" stroke="#c0c0c0"/></svg>
<svg class="a" style="left:1191px;top:168px;" width="16" height="18" viewBox="0 0 16 18"><path d="M3 5 H13 L12 16 H4 Z" fill="#dadada" stroke="#bcbcbc"/><path d="M2 4 H14 M6 2 H10" stroke="#bcbcbc" stroke-width="1.4"/></svg>
<svg class="a" style="left:1219px;top:166px;" width="18" height="20" viewBox="0 0 18 20"><path d="M9 1 V11 M4.500 7 L9 12 L13.500 7" fill="none" stroke="#3d6ea8" stroke-width="3"/><path d="M1 13 Q1 17.500 4 17.500 H14 Q17 17.500 17 13 L15 13 Q14 15 12 15 H6 Q4 15 3 13 Z" fill="#4a7fc0" stroke="#2d5a94" stroke-width="0.8"/></svg>
<svg class="a" style="left:1248px;top:166px;" width="18" height="20" viewBox="0 0 18 20"><path d="M9 12 V4" stroke="#d8c020" stroke-width="3.4"/><path d="M4 7 L9 1.500 L14 7 Z" fill="#f2e23a" stroke="#b8a010" stroke-width="0.8"/><path d="M1 13 Q1 17.500 4 17.500 H14 Q17 17.500 17 13 L15 13 Q14 15 12 15 H6 Q4 15 3 13 Z" fill="#4a7fc0" stroke="#2d5a94" stroke-width="0.8"/></svg>
<div class="a" style="left:1098px;top:196px;width:280px;height:482px;background:#ffffff;border:1px solid #3c8cc0;"></div>
<div class="a" style="left:1100px;top:198px;width:276px;height:20px;background:#e9e9e9;"></div>
<div class="a t m" style="left:1110.5px;top:197px;height:22px;line-height:22px;font-size:16.7px;color:#8a9a2c;">"lebensw" <span style="color:#7f7f7f">=</span>&nbsp; <span style="color:#8a9a2c">'myk'</span></div>
<div class="a" style="left:1099.3px;top:686px;width:24.5px;height:25.5px;background:#e1e1e1;border:2px solid #0078d7;"></div>
<div class="a t " style="left:1099.3px;top:688.5px;height:20px;line-height:20px;font-size:14px;color:#111;width:24.5px;text-align:center;">=</div>
<div class="a" style="left:1127.5px;top:686px;width:24.5px;height:25.5px;background:#e1e1e1;border:1px solid #c0c0c0;"></div>
<div class="a t " style="left:1127.5px;top:688.5px;height:20px;line-height:20px;font-size:14px;color:#111;width:24.5px;text-align:center;">+</div>
<div class="a" style="left:1155.7px;top:686px;width:24.5px;height:25.5px;background:#e1e1e1;border:1px solid #c0c0c0;"></div>
<div class="a t " style="left:1155.7px;top:688.5px;height:20px;line-height:20px;font-size:14px;color:#111;width:24.5px;text-align:center;">-</div>
<div class="a" style="left:1183.8999999999999px;top:686px;width:24.5px;height:25.5px;background:#e1e1e1;border:1px solid #c0c0c0;"></div>
<div class="a t " style="left:1183.8999999999999px;top:688.5px;height:20px;line-height:20px;font-size:14px;color:#111;width:24.5px;text-align:center;">/</div>
<div class="a" style="left:1212.1px;top:686px;width:24.5px;height:25.5px;background:#e1e1e1;border:1px solid #c0c0c0;"></div>
<div class="a t " style="left:1212.1px;top:690.0px;height:20px;line-height:20px;font-size:14px;color:#111;width:24.5px;text-align:center;">*</div>
<div class="a" style="left:1240.3px;top:686px;width:24.5px;height:25.5px;background:#e1e1e1;border:1px solid #c0c0c0;"></div>
<div class="a t " style="left:1240.3px;top:690.0px;height:20px;line-height:20px;font-size:14px;color:#111;width:24.5px;text-align:center;">^</div>
<div class="a" style="left:1268.5px;top:686px;width:24.5px;height:25.5px;background:#e1e1e1;border:1px solid #c0c0c0;"></div>
<div class="a t " style="left:1268.5px;top:688.5px;height:20px;line-height:20px;font-size:14px;color:#111;width:24.5px;text-align:center;letter-spacing:2px;text-indent:2px;">||</div>
<div class="a" style="left:1296.7px;top:686px;width:24.5px;height:25.5px;background:#e1e1e1;border:1px solid #c0c0c0;"></div>
<div class="a t " style="left:1296.7px;top:688.5px;height:20px;line-height:20px;font-size:14px;color:#111;width:24.5px;text-align:center;">(</div>
<div class="a" style="left:1324.8999999999999px;top:686px;width:24.5px;height:25.5px;background:#e1e1e1;border:1px solid #c0c0c0;"></div>
<div class="a t " style="left:1324.8999999999999px;top:688.5px;height:20px;line-height:20px;font-size:14px;color:#111;width:24.5px;text-align:center;">)</div>
<div class="a" style="left:1353.1px;top:686px;width:24.5px;height:25.5px;background:#e1e1e1;border:1px solid #c0c0c0;"></div>
<div class="a t " style="left:1353.1px;top:688.5px;height:20px;line-height:20px;font-size:14px;color:#111;width:24.5px;text-align:center;">'\n'</div>
<div class="a t " style="left:1098px;top:726.8px;height:19.5px;line-height:19.5px;font-size:13.5px;color:#000;letter-spacing:-0.336px;">Objekt</div>
<div class="a" style="left:1142px;top:725px;width:168px;height:23px;background:#ffffff;border:1px solid #7a7a7a;"></div>
<div class="a t " style="left:1147px;top:726.8px;height:19.5px;line-height:19.5px;font-size:13.5px;color:#000;letter-spacing:-0.219px;">Amanita citrina</div>
<svg class="a" style="left:1292px;top:733px;" width="12" height="8" viewBox="0 0 12 8"><path d="M1 1 L6 6 L11 1" fill="none" stroke="#333" stroke-width="1.2"/></svg>
<div class="a" style="left:1318px;top:723.5px;width:25.5px;height:25px;background:#d4d4d4;border:1px solid #c4c4c4;"></div>
<svg class="a" style="left:1323px;top:728px;" width="15" height="16" viewBox="0 0 15 16"><path d="M13 1.500 V14.500 L1.500 8 Z" fill="#c6c6c6" stroke="#b4b4b4"/></svg>
<div class="a" style="left:1352px;top:723.5px;width:25.5px;height:25px;background:#e3e3e3;border:1px solid #b8b8b8;"></div>
<svg class="a" style="left:1357px;top:728px;" width="15" height="16" viewBox="0 0 15 16"><path d="M2 1.500 V14.500 L13.500 8 Z" fill="#4a7fc0" stroke="#2d5a94"/></svg>
<div class="a t " style="left:1098px;top:754.8px;height:19.5px;line-height:19.5px;font-size:13.5px;color:#000;letter-spacing:-0.226px;">Vorschau:</div>
<div class="a t " style="left:1163px;top:754.8px;height:19.5px;line-height:19.5px;font-size:13.5px;color:#000;">1</div>
<div class="a" style="left:1088.5px;top:791px;width:90.5px;height:25.5px;background:#e1e1e1;border:1px solid #adadad;"></div>
<div class="a t " style="left:1088.5px;top:794.5px;height:19.5px;line-height:19.5px;font-size:13.5px;color:#000;width:90.5px;text-align:center;letter-spacing:-0.501px;">Hilfe</div>
<div class="a" style="left:1404px;top:166px;width:138px;height:22px;background:#ffffff;border:1px solid #7a7a7a;"></div>
<svg class="a" style="left:1412px;top:170px;" width="14" height="14" viewBox="0 0 14 14"><circle cx="5.5" cy="5.5" r="4.3" fill="none" stroke="#8a8a8a" stroke-width="1.3"/><path d="M8.700 8.700 L13 13" stroke="#8a8a8a" stroke-width="1.6"/></svg>
<div class="a t " style="left:1433px;top:167.8px;height:19.5px;line-height:19.5px;font-size:13.5px;color:#6e6e6e;letter-spacing:-0.441px;">Suche...</div>
<div class="a" style="left:1550px;top:164.5px;width:91px;height:24.5px;background:#cfcfcf;border:1px solid #c6c6c6;"></div>
<div class="a t " style="left:1554px;top:167.2px;height:19.5px;line-height:19.5px;font-size:13.5px;color:#8a8a8a;letter-spacing:-0.292px;">Wert anzeigen</div>
<div class="a" style="left:1404px;top:198px;width:238px;height:573px;background:#ffffff;border:1px solid #828282;"></div>
<div class="a" style="left:1429.5px;top:199.5px;width:190px;height:131px;background:#c6c6c6;"></div>
<div class="a t " style="left:1433px;top:200.8px;height:20.5px;line-height:20.5px;font-size:14.5px;color:#111;letter-spacing:0.231px;">Bedingungen</div>
<svg class="a" style="left:1413px;top:205px;" width="8" height="12" viewBox="0 0 8 12"><path d="M1.5 1 L6.5 6 L1.5 11" fill="none" stroke="#9a9a9a" stroke-width="1.3"/></svg>
<div class="a t " style="left:1433px;top:222.8px;height:20.5px;line-height:20.5px;font-size:14.5px;color:#111;letter-spacing:0.170px;">Dateien und Pfade</div>
<svg class="a" style="left:1413px;top:227px;" width="8" height="12" viewBox="0 0 8 12"><path d="M1.5 1 L6.5 6 L1.5 11" fill="none" stroke="#9a9a9a" stroke-width="1.3"/></svg>
<div class="a t " style="left:1433px;top:244.8px;height:20.5px;line-height:20.5px;font-size:14.5px;color:#111;letter-spacing:0.300px;">Datensätze und Attribute</div>
<svg class="a" style="left:1413px;top:249px;" width="8" height="12" viewBox="0 0 8 12"><path d="M1.5 1 L6.5 6 L1.5 11" fill="none" stroke="#9a9a9a" stroke-width="1.3"/></svg>
<div class="a t " style="left:1433px;top:266.8px;height:20.5px;line-height:20.5px;font-size:14.5px;color:#111;letter-spacing:0.348px;">Datum und Zeit</div>
<svg class="a" style="left:1413px;top:271px;" width="8" height="12" viewBox="0 0 8 12"><path d="M1.5 1 L6.5 6 L1.5 11" fill="none" stroke="#9a9a9a" stroke-width="1.3"/></svg>
<div class="a t " style="left:1433px;top:288.8px;height:20.5px;line-height:20.5px;font-size:14.5px;color:#111;letter-spacing:-0.375px;">Farbe</div>
<svg class="a" style="left:1413px;top:293px;" width="8" height="12" viewBox="0 0 8 12"><path d="M1.5 1 L6.5 6 L1.5 11" fill="none" stroke="#9a9a9a" stroke-width="1.3"/></svg>
<div class="a t " style="left:1433px;top:310.8px;height:20.5px;line-height:20.5px;font-size:14.5px;color:#111;letter-spacing:0.078px;">Felder und Werte</div>
<svg class="a" style="left:1410px;top:317px;" width="13" height="9" viewBox="0 0 13 9"><path d="M1.500 1.500 L6.500 6.500 L11.500 1.500" fill="none" stroke="#333" stroke-width="1.5"/></svg>
<div class="a" style="left:1455px;top:521.5px;width:164.5px;height:23px;background:#d9d9d9;"></div>
<div class="a t " style="left:1458px;top:332.2px;height:20.5px;line-height:20.5px;font-size:14.5px;color:#111;letter-spacing:-0.518px;">NULL</div>
<div class="a t " style="left:1484px;top:356.1px;height:20.5px;line-height:20.5px;font-size:14.5px;color:#111;letter-spacing:0.357px;">id</div>
<div class="a t " style="left:1458px;top:356.2px;height:17.5px;line-height:17.5px;font-size:11.5px;color:#6a6a6a;font-weight:bold;letter-spacing:-0.2px;">abc</div>
<div class="a t " style="left:1484px;top:380.4px;height:20.5px;line-height:20.5px;font-size:14.5px;color:#111;letter-spacing:0.387px;">funddatum</div>
<svg class="a" style="left:1458px;top:380.9px;" width="19" height="18" viewBox="0 0 19 18"><rect x="1" y="2.500" width="17" height="14.500" fill="#fff" stroke="#555" stroke-width="1.2"/><rect x="1" y="2.500" width="17" height="3.500" fill="#555"/><path d="M4.500 0.500 V4 M14.500 0.500 V4" stroke="#555" stroke-width="1.4"/><path d="M4 8.500 H15 M4 11.500 H15 M4 14.500 H15" stroke="#777" stroke-width="1.6" stroke-dasharray="2 1.500"/></svg>
<div class="a t " style="left:1484px;top:404.2px;height:20.5px;line-height:20.5px;font-size:14.5px;color:#111;letter-spacing:0.259px;">artname</div>
<div class="a t " style="left:1458px;top:404.4px;height:17.5px;line-height:17.5px;font-size:11.5px;color:#6a6a6a;font-weight:bold;letter-spacing:-0.2px;">abc</div>
<div class="a t " style="left:1484px;top:428.2px;height:20.5px;line-height:20.5px;font-size:14.5px;color:#111;letter-spacing:0.375px;">gattung</div>
<div class="a t " style="left:1458px;top:428.4px;height:17.5px;line-height:17.5px;font-size:11.5px;color:#6a6a6a;font-weight:bold;letter-spacing:-0.2px;">abc</div>
<div class="a t " style="left:1484px;top:452.1px;height:20.5px;line-height:20.5px;font-size:14.5px;color:#111;letter-spacing:0.495px;">epithet</div>
<div class="a t " style="left:1458px;top:452.2px;height:17.5px;line-height:17.5px;font-size:11.5px;color:#6a6a6a;font-weight:bold;letter-spacing:-0.2px;">abc</div>
<div class="a t " style="left:1484px;top:476.2px;height:20.5px;line-height:20.5px;font-size:14.5px;color:#111;letter-spacing:0.391px;">autor</div>
<div class="a t " style="left:1458px;top:476.4px;height:17.5px;line-height:17.5px;font-size:11.5px;color:#6a6a6a;font-weight:bold;letter-spacing:-0.2px;">abc</div>
<div class="a t " style="left:1484px;top:500.2px;height:20.5px;line-height:20.5px;font-size:14.5px;color:#111;letter-spacing:0.050px;">deut_name</div>
<div class="a t " style="left:1458px;top:500.4px;height:17.5px;line-height:17.5px;font-size:11.5px;color:#6a6a6a;font-weight:bold;letter-spacing:-0.2px;">abc</div>
<div class="a t " style="left:1484px;top:524.1px;height:20.5px;line-height:20.5px;font-size:14.5px;color:#111;letter-spacing:0.115px;">lebensw</div>
<div class="a t " style="left:1458px;top:524.4px;height:17.5px;line-height:17.5px;font-size:11.5px;color:#3a5f9a;font-weight:bold;letter-spacing:-0.2px;">abc</div>
<div class="a t " style="left:1484px;top:548.1px;height:20.5px;line-height:20.5px;font-size:14.5px;color:#111;letter-spacing:-0.342px;">wgs_84_dec</div>
<div class="a t " style="left:1458px;top:548.4px;height:17.5px;line-height:17.5px;font-size:11.5px;color:#6a6a6a;font-weight:bold;letter-spacing:-0.2px;">abc</div>
<div class="a t " style="left:1484px;top:572.1px;height:20.5px;line-height:20.5px;font-size:14.5px;color:#111;letter-spacing:-0.125px;">y_lat</div>
<div class="a t " style="left:1457px;top:573.1px;height:17px;line-height:17px;font-size:11px;color:#5a5a5a;font-weight:bold;font-family:'Liberation Mono',monospace;letter-spacing:-0.6px;">1.2</div>
<div class="a t " style="left:1484px;top:596.1px;height:20.5px;line-height:20.5px;font-size:14.5px;color:#111;letter-spacing:-0.132px;">x_lon</div>
<div class="a t " style="left:1457px;top:597.1px;height:17px;line-height:17px;font-size:11px;color:#5a5a5a;font-weight:bold;font-family:'Liberation Mono',monospace;letter-spacing:-0.6px;">1.2</div>
<div class="a t " style="left:1484px;top:620.1px;height:20.5px;line-height:20.5px;font-size:14.5px;color:#111;letter-spacing:0.916px;">biotop</div>
<div class="a t " style="left:1458px;top:620.4px;height:17.5px;line-height:17.5px;font-size:11.5px;color:#6a6a6a;font-weight:bold;letter-spacing:-0.2px;">abc</div>
<div class="a t " style="left:1484px;top:644.2px;height:20.5px;line-height:20.5px;font-size:14.5px;color:#111;letter-spacing:1.156px;">biot</div>
<div class="a t " style="left:1484px;top:664.5px;height:20.5px;line-height:20.5px;font-size:14.5px;color:#111;letter-spacing:0.015px;">_nr</div>
<div class="a t " style="left:1458px;top:654.2px;height:17.5px;line-height:17.5px;font-size:11.5px;color:#6a6a6a;font-weight:bold;letter-spacing:-0.2px;">abc</div>
<div class="a t " style="left:1484px;top:688.0px;height:20.5px;line-height:20.5px;font-size:14.5px;color:#111;letter-spacing:0.156px;">pfl_</div>
<div class="a t " style="left:1484px;top:708.4px;height:20.5px;line-height:20.5px;font-size:14.5px;color:#111;letter-spacing:-0.126px;">ges</div>
<div class="a t " style="left:1458px;top:698.2px;height:17.5px;line-height:17.5px;font-size:11.5px;color:#6a6a6a;font-weight:bold;letter-spacing:-0.2px;">abc</div>
<div class="a t " style="left:1484px;top:732.1px;height:20.5px;line-height:20.5px;font-size:14.5px;color:#111;letter-spacing:0.085px;">weg_</div>
<div class="a t " style="left:1484px;top:752.1px;height:20.5px;line-height:20.5px;font-size:14.5px;color:#111;letter-spacing:0.384px;">grabe</div>
<div class="a t " style="left:1458px;top:742.2px;height:17.5px;line-height:17.5px;font-size:11.5px;color:#6a6a6a;font-weight:bold;letter-spacing:-0.2px;">abc</div>
<div class="a" style="left:1620px;top:199px;width:21px;height:571px;background:#f0f0f0;"></div>
<div class="a" style="left:1620px;top:260px;width:21px;height:278px;background:#cdcdcd;"></div>
<svg class="a" style="left:1625px;top:205px;" width="12" height="8" viewBox="0 0 12 8"><path d="M1 7 L6 2 L11 7" fill="none" stroke="#444" stroke-width="1.8"/></svg>
<svg class="a" style="left:1625px;top:756px;" width="12" height="8" viewBox="0 0 12 8"><path d="M1 1 L6 6 L11 1" fill="none" stroke="#444" stroke-width="1.8"/></svg>
<div class="a" style="left:1657px;top:163.5px;width:251.5px;height:304px;background:#ffffff;border:1px solid #828282;"></div>
<div class="a" style="left:1661px;top:169px;width:241px;height:20px;background:#f2f2f2;"></div>
<div class="a t " style="left:1662px;top:168.5px;height:22px;line-height:22px;font-size:16px;color:#93b023;letter-spacing:0.065px;font-weight:bold;">Gruppe field</div>
<div class="a t " style="left:1662px;top:201.8px;height:18.5px;line-height:18.5px;font-size:12.5px;color:#111;letter-spacing:0.234px;">Doppelklicken um ein Feldnamen in den</div>
<div class="a t " style="left:1662px;top:218.4px;height:18.5px;line-height:18.5px;font-size:12.5px;color:#111;letter-spacing:0.140px;">Ausdruck einzufügen.</div>
<div class="a t " style="left:1662px;top:234.8px;height:18.5px;line-height:18.5px;font-size:12.5px;color:#111;letter-spacing:0.141px;">Rechtsklick auf einen Feldnamen öffnet</div>
<div class="a t " style="left:1662px;top:252.1px;height:18.5px;line-height:18.5px;font-size:12.5px;color:#111;letter-spacing:0.266px;">ein Kontextmenü mit</div>
<div class="a t " style="left:1662px;top:269.1px;height:18.5px;line-height:18.5px;font-size:12.5px;color:#111;letter-spacing:0.262px;">Beispielwertladeoptionen.</div>
<div class="a" style="left:1661px;top:298.5px;width:241px;height:17px;background:#f2f2f2;"></div>
<div class="a t " style="left:1662px;top:297.2px;height:19.5px;line-height:19.5px;font-size:13.5px;color:#93b023;letter-spacing:-0.315px;font-weight:bold;">Hinweise</div>
<div class="a t " style="left:1662px;top:327.1px;height:18.5px;line-height:18.5px;font-size:12.5px;color:#111;letter-spacing:0.180px;">Das Laden von Werten aus noch nicht</div>
<div class="a t " style="left:1662px;top:344.4px;height:18.5px;line-height:18.5px;font-size:12.5px;color:#111;letter-spacing:0.131px;">eingefügten WFS-Layern ist nicht</div>
<div class="a t " style="left:1662px;top:361.4px;height:18.5px;line-height:18.5px;font-size:12.5px;color:#111;letter-spacing:0.135px;">unterstützt, z.B. beim Erstellen von</div>
<div class="a t " style="left:1662px;top:378.4px;height:18.5px;line-height:18.5px;font-size:12.5px;color:#111;letter-spacing:0.311px;">Abfragen.</div>
<div class="a t " style="left:1657px;top:479.8px;height:19.5px;line-height:19.5px;font-size:13.5px;color:#000;letter-spacing:-0.152px;">Werte</div>
<div class="a" style="left:1699.5px;top:478.5px;width:208.5px;height:21.5px;background:#ffffff;border:1px solid #7a7a7a;"></div>
<svg class="a" style="left:1708px;top:482px;" width="14" height="14" viewBox="0 0 14 14"><circle cx="5.5" cy="5.5" r="4.3" fill="none" stroke="#8a8a8a" stroke-width="1.3"/><path d="M8.700 8.700 L13 13" stroke="#8a8a8a" stroke-width="1.6"/></svg>
<div class="a t " style="left:1728px;top:479.8px;height:19.5px;line-height:19.5px;font-size:13.5px;color:#6e6e6e;letter-spacing:-0.441px;">Suche...</div>
<div class="a" style="left:1658px;top:508.5px;width:120px;height:25px;background:#e1e1e1;border:1px solid #adadad;"></div>
<div class="a t " style="left:1658px;top:511.8px;height:19.5px;line-height:19.5px;font-size:13.5px;color:#000;width:120px;text-align:center;letter-spacing:-0.317px;">Alle eindeutigen</div>
<div class="a" style="left:1787px;top:508.5px;width:120.5px;height:25px;background:#e1e1e1;border:1px solid #adadad;"></div>
<div class="a t " style="left:1787px;top:511.8px;height:19.5px;line-height:19.5px;font-size:13.5px;color:#000;width:120.5px;text-align:center;letter-spacing:-0.343px;">10 Stichproben</div>
<div class="a" style="left:1657px;top:542.5px;width:251.5px;height:229px;background:#ffffff;border:1px solid #828282;"></div>
<div class="a" style="left:1659px;top:589px;width:246px;height:21px;background:#d9d9d9;"></div>
<div class="a t " style="left:1662.5px;top:545.2px;height:20.5px;line-height:20.5px;font-size:14.5px;color:#111;letter-spacing:0.282px;">fun</div>
<div class="a t " style="left:1662.5px;top:567.2px;height:20.5px;line-height:20.5px;font-size:14.5px;color:#111;letter-spacing:0.498px;">lig</div>
<div class="a t " style="left:1662.5px;top:589.6px;height:20.5px;line-height:20.5px;font-size:14.5px;color:#111;letter-spacing:0.474px;">myk</div>
<div class="a t " style="left:1662.5px;top:611.6px;height:20.5px;line-height:20.5px;font-size:14.5px;color:#111;letter-spacing:0.467px;">myk*lig</div>
<div class="a t " style="left:1662.5px;top:633.2px;height:20.5px;line-height:20.5px;font-size:14.5px;color:#111;letter-spacing:0.360px;">ter</div>
<div class="a" style="left:1669.5px;top:792px;width:141px;height:24px;background:#e5f1fb;border:1px solid #3c96dc;"></div>
<div class="a" style="left:1794.5px;top:795px;width:1px;height:18px;background:#8ab8dc;"></div>
<div class="a t " style="left:1676px;top:789.5px;height:23px;line-height:23px;font-size:17px;color:#5a2a7a;font-family:'Liberation Serif',serif;">ε</div>
<svg class="a" style="left:1683px;top:802px;" width="11" height="11" viewBox="0 0 11 11"><rect x="0.500" y="0.500" width="10" height="10" fill="#f6e04a" stroke="#c9a227"/></svg>
<div class="a t " style="left:1699px;top:794.8px;height:19.5px;line-height:19.5px;font-size:13.5px;color:#000;letter-spacing:-0.289px;">Objekte wählen</div>
<svg class="a" style="left:1797px;top:801px;" width="11" height="7" viewBox="0 0 11 7"><path d="M0.500 0.500 H10.500 L5.500 6 Z" fill="#111"/></svg>
<div class="a" style="left:1827.5px;top:791px;width:90.5px;height:25.5px;background:#e1e1e1;border:1px solid #adadad;"></div>
<div class="a t " style="left:1827.5px;top:794.5px;height:19.5px;line-height:19.5px;font-size:13.5px;color:#000;width:90.5px;text-align:center;letter-spacing:-0.559px;">Schließen</div>
<svg class="a" style="left:0;top:0;pointer-events:none" width="1920" height="1031" viewBox="0 0 1920 1031"><path d="M841.7 419.3 L960.4 445.6" stroke="#ee1111" stroke-width="1.9" fill="none"/><polygon points="975.0,448.9 959.2,450.7 961.5,440.6" fill="#ee1111"/><path d="M841.7 419.3 L806.0 529.6" stroke="#ee1111" stroke-width="1.9" fill="none"/><polygon points="801.4,543.9 801.1,528.0 811.0,531.2" fill="#ee1111"/><path d="M841.7 419.3 L872.6 556.0" stroke="#ee1111" stroke-width="1.9" fill="none"/><polygon points="875.9,570.6 867.5,557.1 877.7,554.8" fill="#ee1111"/><path d="M841.7 419.3 L876.7 504.4" stroke="#ee1111" stroke-width="1.9" fill="none"/><polygon points="882.4,518.3 871.9,506.4 881.5,502.4" fill="#ee1111"/><path d="M841.7 419.3 L910.3 497.3 C 940 535, 962 575, 977.6 618.8 C 988 655, 990.5 700, 990.6 742" fill="none" stroke="#ee1111" stroke-width="1.9"/><polygon points="990.6,756 984.5,741 996.7,741" fill="#ee1111"/><path d="M1870.4 731.0 L1870.4 776.5" stroke="#ee1111" stroke-width="2" fill="none"/><polygon points="1870.4,790.5 1864.9,776.5 1875.9,776.5" fill="#ee1111"/><path d="M1768 853 L1753 822" stroke="#dd1133" stroke-width="2.2"/><polygon points="1745.5,806.5 1757,816 1749,825" fill="#9a1ad0"/><rect x="954.2" y="758.8" width="69.3" height="152.3" fill="none" stroke="#ee1111" stroke-width="4.5"/><rect x="952.2" y="946.5" width="71.4" height="49.6" fill="none" stroke="#ee1111" stroke-width="4.5"/></svg>
<div class="a" style="left:814.9px;top:374.4px;width:49.5px;height:42.2px;background:#ffff8c;border:1px solid #222;border-radius:7px;"></div>
<div class="a t " style="left:814.9px;top:385.0px;height:21px;line-height:21px;font-size:15px;color:#000;width:49.5px;text-align:center;font-weight:bold;">2)</div>
<div class="a" style="left:1845.3px;top:689px;width:50.7px;height:41.8px;background:#ffff8c;border:1px solid #222;border-radius:9px;"></div>
<div class="a t " style="left:1845.3px;top:699.4px;height:21px;line-height:21px;font-size:15px;color:#000;width:50.7px;text-align:center;font-weight:bold;">3)</div>
<div class="a" style="left:1742.4px;top:852.9px;width:50px;height:40.8px;background:#ffff8c;border:1px solid #222;border-radius:9px;"></div>
<div class="a t " style="left:1742.4px;top:862.8px;height:21px;line-height:21px;font-size:15px;color:#000;width:50px;text-align:center;font-weight:bold;">1)</div>
<div class="a" style="left:632.8px;top:946px;width:102px;height:42px;background:#ffff8c;border:1px solid #222;border-radius:10px;"></div>
<div class="a t " style="left:632.8px;top:956.0px;height:22px;line-height:22px;font-size:16px;color:#000;width:102px;text-align:center;font-weight:bold;">Bild 6</div>
</body></html>
